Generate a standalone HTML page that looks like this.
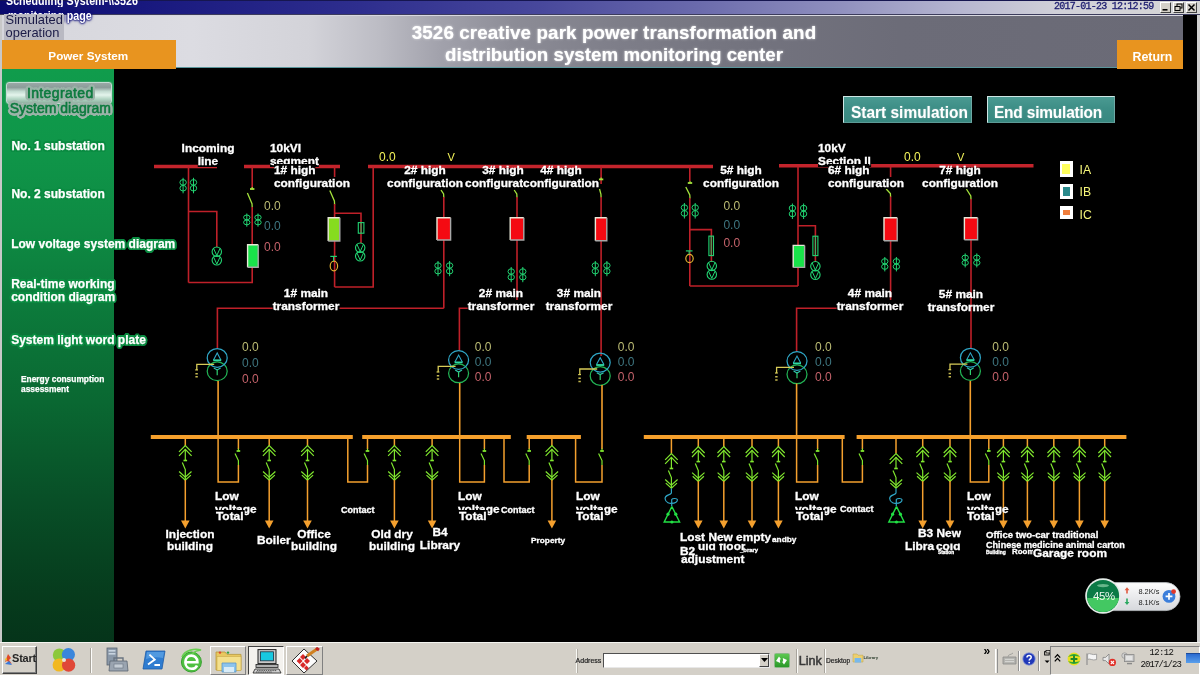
<!DOCTYPE html>
<html><head><meta charset="utf-8"><title>Power monitoring</title>
<style>
*{margin:0;padding:0;box-sizing:border-box}
html,body{width:1200px;height:675px;overflow:hidden;background:#000}
body{font-family:"Liberation Sans",sans-serif}
#root{position:relative;width:1200px;height:675px;overflow:hidden;background:#000;-webkit-font-smoothing:antialiased;filter:opacity(1);will-change:opacity}
#root>div,#root>svg{position:absolute}
#dg{left:0;top:0}
.lb{color:#fff;font-weight:bold;white-space:nowrap;-webkit-text-stroke:.3px #fff}
.v{white-space:nowrap;line-height:14px;font-weight:normal}
/* title bar */
#tb{left:0;top:0;width:1200px;height:15px;background:linear-gradient(90deg,#0a0a6e 0%,#18187e 12%,#2e2e8e 30%,#48489c 45%,#6a6aac 58%,#9090be 70%,#b6b6d0 80%,#d0d0d8 88%,#d6d6d6 100%);border-top:1px solid #161650;border-bottom:1px solid #3c3c5c}
#tb .t1{position:absolute;left:6px;top:-5.6px;transform:scaleY(1.25);transform-origin:0 100%;color:#fff;font-weight:bold;font-size:10.7px;white-space:nowrap;line-height:12px}
#t2{left:8px;top:9px;transform:scaleY(1.2);transform-origin:0 50%;color:#fff;font-weight:bold;font-size:10.7px;white-space:nowrap;line-height:12px;text-shadow:0 0 1.5px #10107a,0 0 2px #10107a,0 0 2px #10107a,0 0 3px #10107a}
#date{left:1054px;top:1px;font-family:"Liberation Mono",monospace;font-size:10px;line-height:12px;color:#1c1c70;white-space:nowrap;letter-spacing:-0.76px;-webkit-text-stroke:.3px #1c1c70}
.wb{top:2px;width:11px;height:11px;background:#d4d0c8;border:1px solid;border-color:#fff #404040 #404040 #fff}
/* header */
#hd{left:2px;top:15px;width:1181.4px;height:53.4px;background:linear-gradient(90deg,#d6d6dc 0%,#dcdce2 16%,#d3d3d9 26%,#bcbcc4 32%,#a2a2ac 37%,#8c8c96 43.5%,#7e7e89 52%,#74747f 62%,#6c6c78 76%,#6a6a76 100%);border-bottom:1.6px solid #5a969c;border-top:1px solid #d8d8e0}
#hdl{left:0;top:15px;width:2px;height:627px;background:#c8c8c8}
#hdr{left:1197px;top:15px;width:3px;height:627px;background:#d0d0d0}
#sim{left:3.6px;top:14.4px;width:60.4px;height:25.6px;background:#b9b9c2;color:#1a1a46;font-size:12.9px;line-height:12.6px;padding:0 0 0 2px;white-space:nowrap}
#ps{left:2px;top:40px;width:174px;height:28.6px;background:#e8941f}
#ps span{position:absolute;left:0;width:172.6px;top:8px;text-align:center;color:#fff;font-weight:bold;font-size:11.7px;line-height:15px}
#ret{left:1116.6px;top:40px;width:66.8px;height:28.6px;background:#e8941f}
#ret span{position:absolute;left:0;width:100%;top:10px;text-align:center;color:#fff;font-weight:bold;font-size:12.4px;line-height:15px;padding-left:5px}
#title{left:300px;width:628px;top:22.2px;text-align:center;color:#fff;font-weight:bold;font-size:18.8px;line-height:21.6px;white-space:nowrap;text-shadow:0 0 3px rgba(255,255,255,.55),0 0 1px rgba(255,255,255,.6)}
/* sidebar */
#sb{left:2px;top:68.6px;width:112px;height:573px;background:linear-gradient(180deg,#109c4c 0%,#0f9649 14%,#0e8a43 28%,#0c7c3c 40%,#0a6832 58%,#084f27 75%,#063a1c 93%,#05341a 100%)}
.sbt{color:#fff;font-weight:bold;font-size:12px;line-height:12.6px;white-space:nowrap;-webkit-text-stroke:.25px #fff;text-shadow:1.30px 0.00px .5px #0b8c42,0.92px 0.92px .5px #0b8c42,0.00px 1.30px .5px #0b8c42,-0.92px 0.92px .5px #0b8c42,-1.30px 0.00px .5px #0b8c42,-0.92px -0.92px .5px #0b8c42,-0.00px -1.30px .5px #0b8c42,0.92px -0.92px .5px #0b8c42,2.10px 0.00px .5px #0b8c42,1.82px 1.05px .5px #0b8c42,1.05px 1.82px .5px #0b8c42,0.00px 2.10px .5px #0b8c42,-1.05px 1.82px .5px #0b8c42,-1.82px 1.05px .5px #0b8c42,-2.10px 0.00px .5px #0b8c42,-1.82px -1.05px .5px #0b8c42,-1.05px -1.82px .5px #0b8c42,-0.00px -2.10px .5px #0b8c42,1.05px -1.82px .5px #0b8c42,1.82px -1.05px .5px #0b8c42}
#ig{left:5.6px;top:82px;width:106.4px;height:21.6px;border-radius:3px;background:linear-gradient(180deg,#9aa8a6 0%,#8c9c9a 22%,#c4dcd2 42%,#e4f4ec 60%,#b8d8c8 78%,#8fb4a2 100%);border:1.6px solid #c4dcd4;box-shadow:0 0 1.5px #a8c4b8}
#igt{left:0px;top:86px;width:120.6px;text-align:center;color:#0c7a3e;font-size:14px;line-height:15px;white-space:nowrap;text-shadow:1.20px 0.00px .4px #9cb4a9,0.85px 0.85px .4px #9cb4a9,0.00px 1.20px .4px #9cb4a9,-0.85px 0.85px .4px #9cb4a9,-1.20px 0.00px .4px #9cb4a9,-0.85px -0.85px .4px #9cb4a9,-0.00px -1.20px .4px #9cb4a9,0.85px -0.85px .4px #9cb4a9,2.00px 0.00px .4px #9cb4a9,1.73px 1.00px .4px #9cb4a9,1.00px 1.73px .4px #9cb4a9,0.00px 2.00px .4px #9cb4a9,-1.00px 1.73px .4px #9cb4a9,-1.73px 1.00px .4px #9cb4a9,-2.00px 0.00px .4px #9cb4a9,-1.73px -1.00px .4px #9cb4a9,-1.00px -1.73px .4px #9cb4a9,-0.00px -2.00px .4px #9cb4a9,1.00px -1.73px .4px #9cb4a9,1.73px -1.00px .4px #9cb4a9,2.60px 0.00px .4px #9cb4a9,2.40px 0.99px .4px #9cb4a9,1.84px 1.84px .4px #9cb4a9,0.99px 2.40px .4px #9cb4a9,0.00px 2.60px .4px #9cb4a9,-0.99px 2.40px .4px #9cb4a9,-1.84px 1.84px .4px #9cb4a9,-2.40px 0.99px .4px #9cb4a9,-2.60px 0.00px .4px #9cb4a9,-2.40px -0.99px .4px #9cb4a9,-1.84px -1.84px .4px #9cb4a9,-0.99px -2.40px .4px #9cb4a9,-0.00px -2.60px .4px #9cb4a9,0.99px -2.40px .4px #9cb4a9,1.84px -1.84px .4px #9cb4a9,2.40px -0.99px .4px #9cb4a9;-webkit-text-stroke:.55px #0c7a3e}
/* sim buttons */
.sbtn{top:95.5px;height:27.5px;background:linear-gradient(180deg,#4a9a92 0%,#3d8e86 45%,#388880 100%);border:1.5px solid;border-color:#cfe6e4 #6ea8a4 #5c9a96 #cfe6e4;color:#fff;font-weight:bold;font-size:16.2px;line-height:18px;white-space:nowrap;text-shadow:0 0 2px rgba(255,255,255,.35)}
.sbtn span{position:absolute;top:6.1px;transform:scaleX(.955);transform-origin:0 50%}
/* legend */
.lgb{left:1059.6px;width:13.8px;background:#fff}
.lgb i{position:absolute;display:block}
.lgt{left:1079.6px;color:#f6f67a;font-size:12.2px;line-height:14px;white-space:nowrap}
/* taskbar */
#tk{left:0;top:641.6px;width:1200px;height:34px;background:#d4d0c8;border-top:1px solid #f4f4f0}
#tk *{position:absolute}

</style></head>
<body>
<div id="root">
<div id="tb"><div class="t1">Scheduling System-\\3526</div></div>
<div id="date">2017-01-23 12:12:59</div>
<div class="wb" style="left:1160px"><svg width="9" height="9" style="position:absolute;left:0;top:0"><rect x="1.5" y="6" width="5" height="1.6" fill="#000"/></svg></div>
<div class="wb" style="left:1173px"><svg width="9" height="9" style="position:absolute;left:0;top:0"><rect x="3" y="1" width="5" height="4" fill="none" stroke="#000" stroke-width="1"/><rect x="1" y="3.5" width="5" height="4" fill="#d4d0c8" stroke="#000" stroke-width="1"/></svg></div>
<div class="wb" style="left:1186px"><svg width="9" height="9" style="position:absolute;left:0;top:0"><path d="M1.5 1.5 L7.5 7.5 M7.5 1.5 L1.5 7.5" stroke="#000" stroke-width="1.5"/></svg></div>
<div id="hdl"></div><div id="hdr"></div>
<div id="hd"></div>
<div id="t2">monitoring page</div>
<div id="sim">Simulated<br>operation</div>
<div id="ps"><span>Power System</span></div>
<div id="ret"><span>Return</span></div>
<div id="title"><span style="letter-spacing:.11px">3526 creative park power transformation and</span><br>distribution system monitoring center</div>
<div id="sb"></div>
<div id="ig"></div>
<div id="igt"><span style="letter-spacing:.36px">Integrated</span><br>System diagram</div>
<div class="sbt" style="left:11.4px;top:140.4px">No. 1 substation</div>
<div class="sbt" style="left:11.4px;top:188.4px">No. 2 substation</div>
<div class="sbt" style="left:11.2px;top:237.6px">Low voltage system diagram</div>
<div class="sbt" style="left:11.2px;top:278px">Real-time working<br>condition diagram</div>
<div class="sbt" style="left:11.2px;top:333.6px">System light word plate</div>
<div class="sbt" style="left:21px;top:373.8px;font-size:8.4px;line-height:10.2px;text-shadow:none">Energy consumption<br>assessment</div>
<div class="sbtn" style="left:843px;width:129px"><span style="left:6.6px">Start simulation</span></div>
<div class="sbtn" style="left:987px;width:128.4px"><span style="left:5.6px;letter-spacing:-.2px">End simulation</span></div>
<div class="lgb" style="top:161px;height:16px"><i style="left:2.6px;top:2.8px;width:7.6px;height:10px;background:#ffff5e"></i></div>
<div class="lgb" style="top:183.8px;height:14.8px"><i style="left:3.4px;top:3.6px;width:6.6px;height:8.2px;background:#2a8a8c"></i></div>
<div class="lgb" style="top:206px;height:12.8px"><i style="left:3px;top:3.8px;width:7px;height:5.4px;background:#f07e3c"></i></div>
<div class="lgt" style="top:162.6px">IA</div>
<div class="lgt" style="top:185px">IB</div>
<div class="lgt" style="top:207.6px">IC</div>
<!--TB-BEGIN-->
<div id="wg" style="left:1086.4px;top:582.4px;width:95px;height:29px">
<svg width="95" height="29" viewBox="0 0 95 29" style="position:absolute;left:0;top:0;overflow:visible">
<defs><clipPath id="cc"><circle cx="17" cy="14" r="16"/></clipPath>
<linearGradient id="pg" x1="0" y1="0" x2="0" y2="1"><stop offset="0" stop-color="#fdfdfd"/><stop offset="1" stop-color="#d6d8dc"/></linearGradient></defs>
<rect x="8" y="0.6" width="86" height="28" rx="14" fill="url(#pg)" stroke="#b8bcc0" stroke-width=".8"/>
<circle cx="17" cy="14" r="17.8" fill="#e4ece8"/>
<circle cx="17" cy="14" r="16.1" fill="#0b7a46"/>
<rect x="0" y="16" width="34" height="16" fill="#43c862" clip-path="url(#cc)"/>
<ellipse cx="17" cy="3.6" rx="6" ry="1.6" fill="#8fd0a8" opacity=".7"/>
<path d="M41 5.2 L38.6 8.2 H40.2 V11.6 H41.8 V8.2 H43.4 Z" fill="#e05a40"/>
<path d="M41 23 L38.6 20 H40.2 V16.6 H41.8 V20 H43.4 Z" fill="#2aa860"/>
<circle cx="83" cy="14.4" r="6.4" fill="#3b7edb"/>
<path d="M83 11 V17.8 M79.6 14.4 H86.4" stroke="#fff" stroke-width="1.7"/>
<circle cx="87.6" cy="9.6" r="2.4" fill="#e0382c"/>
</svg>
<div style="position:absolute;left:5.5px;top:6.6px;width:24px;text-align:center;color:#eef8f0;font-size:11.4px;line-height:14px;letter-spacing:-.3px">45%</div>
<div style="position:absolute;left:52px;top:3.8px;color:#222;font-size:7.4px;line-height:11px;white-space:nowrap">8.2K/s<br>8.1K/s</div>
</div>
<div id="tk">
<!-- start -->
<div style="left:2px;top:3px;width:35px;height:28px;border:1px solid;border-color:#fff #404040 #404040 #fff;box-shadow:inset -1px -1px 0 #808080"></div>
<svg style="left:4px;top:10px" width="9" height="13" viewBox="0 0 9 13"><path d="M1 9 L4 1 L7 5 L5 7 L8 11 L3 8 Z" fill="#e04a28"/><path d="M1 11 L5 8 L8 12 Z" fill="#3a78d8"/><path d="M0.5 6 L3 5 L3 8 Z" fill="#f0c020"/></svg>
<div style="left:12.2px;top:8.4px;font-size:11.8px;font-weight:bold;line-height:14px;color:#262626;letter-spacing:-.2px;transform:scaleX(.93);transform-origin:0 0">Start</div>
<!-- 4 colour -->
<svg style="left:51px;top:3px" width="26" height="28" viewBox="0 0 26 28"><circle cx="8.4" cy="9" r="6.6" fill="#8cc83c"/><circle cx="17.4" cy="8.6" r="6.6" fill="#3a86dc"/><circle cx="8.2" cy="19" r="6.6" fill="#f2b820"/><circle cx="17.6" cy="19.2" r="6.6" fill="#e04838"/><circle cx="13" cy="14" r="2" fill="#e8e4dc"/></svg>
<div style="left:90.4px;top:5px;width:2px;height:25px;border-left:1px solid #a8a49c;border-right:1px solid #fdfdfb"></div>
<!-- server icon -->
<svg style="left:104px;top:3px" width="26" height="28" viewBox="0 0 26 28"><rect x="3" y="2" width="10" height="17" fill="#8a98a8" stroke="#5a6470" stroke-width=".8"/><rect x="4.6" y="4" width="6.8" height="1.6" fill="#c8d4e0"/><rect x="4.6" y="7" width="6.8" height="1.6" fill="#c8d4e0"/><path d="M6 15 H23 L24 25 H5 Z" fill="#9aa4b0" stroke="#5c6672" stroke-width=".8"/><rect x="10" y="18" width="9" height="4" fill="#c4ccd4" stroke="#6a7480" stroke-width=".6"/><path d="M10 15 V12 H19 V15" fill="none" stroke="#6a7480" stroke-width="1.4"/></svg>
<!-- powershell -->
<svg style="left:142px;top:7px" width="24" height="20" viewBox="0 0 24 20"><path d="M4 1 H23 L20 19 H1 Z" fill="#2f7cd0" stroke="#1c5ca8" stroke-width=".8"/><path d="M5 2 H22 L21 8 Q12 6 4 9 Z" fill="#5aa0e4" opacity=".8"/><path d="M7.4 4.6 L12.8 9.6 L6 14.6 M12.4 15 H18" fill="none" stroke="#fff" stroke-width="1.8"/></svg>
<!-- IE green -->
<svg style="left:179px;top:4px" width="26" height="27" viewBox="0 0 26 27"><circle cx="12.4" cy="15" r="10" fill="#4ec040"/><circle cx="12.4" cy="15" r="10" fill="none" stroke="#38a030" stroke-width="1"/><path d="M6.6 15.2 H18.4 C18.4 10 14.8 8.6 12.4 8.6 C9 8.6 6.4 11.4 6.4 15.2 C6.4 19.4 9.2 21.8 12.6 21.8 C15.2 21.8 17.2 20.4 18 18.4" fill="none" stroke="#fff" stroke-width="2.6"/><path d="M3 10 C6 3 16 1 22 3 C18 3.4 15 5 13 6.6" fill="none" stroke="#68d050" stroke-width="1.6"/></svg>
<!-- folder button -->
<div style="left:210px;top:3px;width:36px;height:29px;border:1px solid;border-color:#fff #808080 #808080 #fff"></div>
<svg style="left:214px;top:5px" width="30" height="26" viewBox="0 0 30 26"><path d="M2 4 H11 L13 6.4 H27 V22 H2 Z" fill="#e8c860" stroke="#b89838" stroke-width=".8"/><circle cx="6" cy="4.6" r="1.2" fill="#e04030"/><circle cx="14" cy="4.6" r="1.2" fill="#30a040"/><rect x="3" y="8.4" width="24" height="14" fill="#f4e08c" stroke="#c8a848" stroke-width=".6"/><path d="M8 24 V15 H22 V24 Z" fill="#8cc4ec" stroke="#5a98c8" stroke-width=".8"/><rect x="10" y="19" width="10" height="5" fill="#d8ecf8"/></svg>
<!-- computer (pressed) -->
<div style="left:248px;top:3px;width:36px;height:29px;background:#f4f2ee;border:1px solid;border-color:#404040 #fff #fff #404040"></div>
<svg style="left:252px;top:5px" width="30" height="26" viewBox="0 0 30 26"><rect x="6" y="1.6" width="18" height="14" fill="#c8c8c8" stroke="#202020" stroke-width="1"/><rect x="8.4" y="3.8" width="13.2" height="9" fill="#18c8e0" stroke="#203040" stroke-width=".8"/><rect x="4" y="16.4" width="22" height="3" fill="#b0b0b0" stroke="#202020" stroke-width=".8"/><path d="M3 21 H27 L29 25 H1 Z" fill="#d0d0d0" stroke="#202020" stroke-width=".8"/><path d="M5 22.6 H25 M4 24 H20" stroke="#303030" stroke-width=".8" stroke-dasharray="1.4 .8"/></svg>
<!-- paint -->
<div style="left:286px;top:3px;width:37px;height:29px;border:1px solid;border-color:#fff #808080 #808080 #fff"></div>
<svg style="left:290px;top:4px" width="30" height="28" viewBox="0 0 30 28"><path d="M14 2 L27 14 L14 26 L2 14 Z" fill="#fcfcfc" stroke="#303030" stroke-width="1"/><path d="M10 10 l3 -3 l3 3 l-3 3 z M14 14 l3 -3 l3 3 l-3 3 z M10 18 l3 -3 l3 3 l-3 3 z M6.6 14 l3 -3 l3 3 l-3 3 z M14 21 l2.4 -2.4 l2.4 2.4 l-2.4 2.4 z" fill="#d82828"/><path d="M17 9 L27 2" stroke="#d08020" stroke-width="3"/><path d="M26 1 L29 3" stroke="#c02020" stroke-width="3"/><path d="M17 9 l-2 2.6" stroke="#202020" stroke-width="1.6"/></svg>
<!-- address -->
<div style="left:576px;top:6px;width:2px;height:24px;border-left:1px solid #f8f8f4;border-right:1px solid #b4b0a8"></div>
<div style="left:575.6px;top:14.4px;font-size:7px;line-height:8px;color:#222;-webkit-text-stroke:.2px #222">Address</div>
<div style="left:602.6px;top:10px;width:167px;height:15.4px;background:#fff;border:1.6px solid;border-color:#505050 #e8e8e8 #e8e8e8 #505050"></div>
<div style="left:758.6px;top:11.6px;width:10px;height:12.4px;background:#d4d0c8;border:1px solid;border-color:#fff #404040 #404040 #fff"></div>
<svg style="left:760.6px;top:15.6px" width="7" height="5"><path d="M0 0 H7 L3.5 4 Z" fill="#000"/></svg>
<div style="left:773.8px;top:10px;width:16px;height:15px;background:linear-gradient(180deg,#5cc850,#2a9828);border:1px solid #8cb888;border-radius:1.5px"></div>
<svg style="left:775.4px;top:12px" width="13" height="11" viewBox="0 0 13 11"><path d="M1 6 L4 1.6 L6 4.2 L4.8 4.6 L5.2 8 Z" fill="#fff"/><path d="M12 5 L9 9.4 L7 6.8 L8.2 6.4 L7.8 3 Z" fill="#fff"/></svg>
<div style="left:795.6px;top:6px;width:2px;height:24px;border-left:1px solid #a8a49c;border-right:1px solid #fbfbf8"></div>
<div style="left:798.8px;top:11.2px;font-size:12.6px;line-height:14px;color:#383838;-webkit-text-stroke:.5px #383838">Link</div>
<div style="left:823.6px;top:6px;width:2px;height:24px;border-left:1px solid #a8a49c;border-right:1px solid #fbfbf8"></div>
<div style="left:826px;top:14.8px;font-size:6.6px;line-height:8px;color:#222;-webkit-text-stroke:.2px #222">Desktop</div>
<svg style="left:851.6px;top:9.6px" width="12" height="12" viewBox="0 0 12 12"><path d="M1 2 H5 L6 3.2 H11 V10 H1 Z" fill="#ecd070" stroke="#c0a040" stroke-width=".5"/><rect x="2.6" y="6" width="6.6" height="4.6" fill="#78b8ec"/></svg>
<div style="left:863.4px;top:12.6px;font-size:4.4px;line-height:5px;color:#304030;font-weight:bold">Library</div>
<!-- right toolbars -->
<div style="left:983.4px;top:2.6px;font-size:12px;line-height:12px;font-weight:bold;color:#000;letter-spacing:-1.2px">&raquo;</div>
<div style="left:995px;top:6px;width:3px;height:24px;border-left:1px solid #fff;border-right:1px solid #909090;background:#e8e6e0"></div>
<svg style="left:1001.6px;top:9px" width="15" height="13" viewBox="0 0 15 13"><path d="M1 5 H14 V12 H1 Z" fill="#b4b4b0" stroke="#8c8c88" stroke-width=".8"/><path d="M6 5 C6 2 9 3 11 1" fill="none" stroke="#a0a09c" stroke-width="1"/><path d="M3 7.4 H12 M3 9.6 H12" stroke="#d8d8d4" stroke-width="1"/></svg>
<div style="left:1018px;top:8px;width:2px;height:20px;border-left:1px solid #909090;border-right:1px solid #fff"></div>
<svg style="left:1022.4px;top:9.4px" width="14" height="14" viewBox="0 0 14 14"><circle cx="7" cy="7" r="6.2" fill="#2038b8" stroke="#8898d8" stroke-width=".8"/><path d="M5 5.4 C5 2.8 9.2 2.8 9.2 5.2 C9.2 6.8 7.2 6.8 7.2 8.4" fill="none" stroke="#fff" stroke-width="1.5"/><circle cx="7.2" cy="10.6" r=".95" fill="#fff"/></svg>
<div style="left:1038px;top:8px;width:2px;height:20px;border-left:1px solid #909090;border-right:1px solid #fff"></div>
<svg style="left:1042.6px;top:6px" width="8" height="16" viewBox="0 0 8 16"><rect x="1.6" y="2.6" width="4.6" height="3.4" fill="none" stroke="#000" stroke-width=".9"/><rect x="3" y="1.4" width="4" height="2.6" fill="#d4d0c8" stroke="#000" stroke-width=".7"/><path d="M1.6 11.4 H6.6 L4.1 14 Z" fill="#000"/></svg>
<!-- tray -->
<div style="left:1050.4px;top:3px;width:150px;height:29px;border:1px solid;border-color:#808080 #fff #fff #808080"></div>
<svg style="left:1054px;top:10.6px" width="7" height="10" viewBox="0 0 7 10"><path d="M.8 4.6 L3.5 1.6 L6.2 4.6 M.8 8.4 L3.5 5.4 L6.2 8.4" fill="none" stroke="#000" stroke-width="1.3"/></svg>
<svg style="left:1066.6px;top:9.4px" width="14" height="14" viewBox="0 0 14 14"><circle cx="7" cy="7" r="6.4" fill="#e8e020"/><path d="M1 5 C4 1 10 1 13 5 C10 3.6 4 3.6 1 5 Z M1 9 C4 13 10 13 13 9 C10 10.4 4 10.4 1 9 Z" fill="#30a838"/><path d="M7 3.6 V10.4 M3.6 7 H10.4" stroke="#208828" stroke-width="1.9"/></svg>
<svg style="left:1084.6px;top:9.4px" width="14" height="14" viewBox="0 0 14 14"><path d="M2 1.4 V13" stroke="#909090" stroke-width="1.2"/><path d="M2.6 2 C5 .6 7 3.6 11.6 2.2 V7.6 C7 9 5 6 2.6 7.4 Z" fill="#f4f4f4" stroke="#909090" stroke-width=".8"/></svg>
<svg style="left:1102px;top:9px" width="15" height="15" viewBox="0 0 15 15"><path d="M1 5.4 H3.6 L7 2 V12 L3.6 8.6 H1 Z" fill="#e8e8e8" stroke="#808080" stroke-width=".8"/><circle cx="10.4" cy="10.4" r="3.6" fill="#e03028"/><path d="M8.8 8.8 L12 12 M12 8.8 L8.8 12" stroke="#fff" stroke-width="1.1"/></svg>
<svg style="left:1120.6px;top:8.4px" width="15" height="15" viewBox="0 0 15 15"><circle cx="3.6" cy="4.6" r="2.8" fill="#d0d0d0" stroke="#909090" stroke-width=".7"/><rect x="3.4" y="3.6" width="9.6" height="7" fill="#c8c8c8" stroke="#888" stroke-width=".8"/><rect x="5" y="5" width="6.4" height="4" fill="#e4e4e4"/><path d="M6 12.6 H11" stroke="#888" stroke-width="1.4"/></svg>
<div style="left:1149.6px;top:5.6px;font-family:'Liberation Mono',monospace;font-size:9px;line-height:10px;color:#101010;letter-spacing:-.7px">12:12</div>
<div style="left:1140.6px;top:17.6px;font-family:'Liberation Mono',monospace;font-size:9px;line-height:10px;color:#101010;letter-spacing:-.9px">2017/1/23</div>
<div style="left:1186px;top:10px;width:14px;height:10px;background:linear-gradient(180deg,#2a6ad0,#5aa0ec);border-top:1px solid #1c4a98"></div>
</div>
<!--TB-END-->

<svg id="dg" width="1200" height="675" viewBox="0 0 1200 675" shape-rendering="geometricPrecision">
<line x1="154.0" y1="166.5" x2="217.0" y2="166.5" stroke="#c4242c" stroke-width="3.6" />
<line x1="244.0" y1="166.5" x2="340.0" y2="166.5" stroke="#c4242c" stroke-width="3.6" />
<line x1="368.0" y1="166.5" x2="713.0" y2="166.5" stroke="#c4242c" stroke-width="3.6" />
<line x1="779.0" y1="165.8" x2="1033.5" y2="165.8" stroke="#c4242c" stroke-width="3.6" />
<line x1="188.5" y1="166.5" x2="188.5" y2="282.5" stroke="#bf2029" stroke-width="1.6" />
<line x1="183.1" y1="177.8" x2="183.1" y2="193.3" stroke="#22d472" stroke-width="1.0" />
<ellipse cx="183.1" cy="182.4" rx="3.2" ry="2.8" stroke="#22d472" stroke-width="1.0" fill="none"/>
<ellipse cx="183.1" cy="188.2" rx="3.2" ry="2.8" stroke="#22d472" stroke-width="1.0" fill="none"/>
<line x1="193.5" y1="177.8" x2="193.5" y2="193.3" stroke="#22d472" stroke-width="1.0" />
<ellipse cx="193.5" cy="182.4" rx="3.2" ry="2.8" stroke="#22d472" stroke-width="1.0" fill="none"/>
<ellipse cx="193.5" cy="188.2" rx="3.2" ry="2.8" stroke="#22d472" stroke-width="1.0" fill="none"/>
<polyline points="188.5,211.5 216.8,211.5 216.8,247.0" stroke="#bf2029" stroke-width="1.6" fill="none" />
<ellipse cx="216.8" cy="251.7" rx="4.7" ry="4.7" stroke="#22d472" stroke-width="1.1" fill="none"/>
<polyline points="213.6,248.5 216.8,255.5 220.0,248.5" stroke="#22d472" stroke-width="1.0" fill="none" />
<ellipse cx="216.8" cy="260.3" rx="4.7" ry="4.7" stroke="#22d472" stroke-width="1.1" fill="none"/>
<polyline points="213.6,257.1 216.8,264.1 220.0,257.1" stroke="#22d472" stroke-width="1.0" fill="none" />
<polyline points="188.5,282.5 252.2,282.5 252.2,267.0" stroke="#bf2029" stroke-width="1.6" fill="none" />
<line x1="252.2" y1="166.5" x2="252.2" y2="188.0" stroke="#bf2029" stroke-width="1.6" />
<line x1="250.0" y1="189.0" x2="254.4" y2="189.0" stroke="#a4e23c" stroke-width="1.8" />
<line x1="252.2" y1="187.0" x2="252.2" y2="189.0" stroke="#a4e23c" stroke-width="1.2" />
<polyline points="247.4,193.0 252.0,203.7 252.2,207.2" stroke="#a4e23c" stroke-width="1.3" fill="none" />
<line x1="252.2" y1="207.0" x2="252.2" y2="245.0" stroke="#bf2029" stroke-width="1.6" />
<line x1="246.8" y1="213.5" x2="246.8" y2="226.7" stroke="#22d472" stroke-width="1.0" />
<ellipse cx="246.8" cy="217.4" rx="3.2" ry="2.4" stroke="#22d472" stroke-width="1.0" fill="none"/>
<ellipse cx="246.8" cy="222.4" rx="3.2" ry="2.4" stroke="#22d472" stroke-width="1.0" fill="none"/>
<line x1="258.0" y1="213.5" x2="258.0" y2="226.7" stroke="#22d472" stroke-width="1.0" />
<ellipse cx="258.0" cy="217.4" rx="3.2" ry="2.4" stroke="#22d472" stroke-width="1.0" fill="none"/>
<ellipse cx="258.0" cy="222.4" rx="3.2" ry="2.4" stroke="#22d472" stroke-width="1.0" fill="none"/>
<rect x="247.6" y="244.8" width="10.6" height="22.4" fill="#19e34a" stroke="none" stroke-width="1" />
<path d="M247.6 267.2 V244.8 H258.2" stroke="#e8e8d8" stroke-width="1.4" fill="none"/>
<path d="M258.2 244.8 V267.2 H247.6" stroke="#a8a8a8" stroke-width="1.4" fill="none"/>
<line x1="334.6" y1="166.5" x2="334.6" y2="186.0" stroke="#bf2029" stroke-width="1.6" />
<polyline points="329.8,190.6 334.4,201.0 334.6,204.5" stroke="#a4e23c" stroke-width="1.3" fill="none" />
<line x1="334.6" y1="204.0" x2="334.6" y2="287.0" stroke="#bf2029" stroke-width="1.6" />
<polyline points="334.6,213.2 361.0,213.2 361.0,243.0" stroke="#bf2029" stroke-width="1.6" fill="none" />
<rect x="358.3" y="222.6" width="5.6" height="10.6" fill="none" stroke="#22d472" stroke-width="1.1" />
<line x1="361.1" y1="222.6" x2="361.1" y2="233.2" stroke="#22d472" stroke-width="0.9" />
<ellipse cx="360.2" cy="247.7" rx="4.7" ry="4.7" stroke="#22d472" stroke-width="1.1" fill="none"/>
<polyline points="357.0,244.5 360.2,251.5 363.4,244.5" stroke="#22d472" stroke-width="1.0" fill="none" />
<ellipse cx="360.2" cy="256.3" rx="4.7" ry="4.7" stroke="#22d472" stroke-width="1.1" fill="none"/>
<polyline points="357.0,253.1 360.2,260.1 363.4,253.1" stroke="#22d472" stroke-width="1.0" fill="none" />
<rect x="328.2" y="217.8" width="11.6" height="23.2" fill="#86dc1e" stroke="none" stroke-width="1" />
<path d="M328.2 241.0 V217.8 H339.8" stroke="#e8e8d8" stroke-width="1.4" fill="none"/>
<path d="M339.8 217.8 V241.0 H328.2" stroke="#a8a8a8" stroke-width="1.4" fill="none"/>
<ellipse cx="333.9" cy="266.0" rx="3.7" ry="4.9" stroke="#e0b030" stroke-width="1.2" fill="none"/>
<line x1="330.3" y1="256.4" x2="336.9" y2="256.4" stroke="#22d472" stroke-width="1.2" />
<line x1="333.5" y1="256.4" x2="333.5" y2="261.1" stroke="#22d472" stroke-width="1.0" />
<polyline points="334.6,287.0 373.2,287.0 373.2,166.5" stroke="#bf2029" stroke-width="1.6" fill="none" />
<polyline points="441.0,190.0 443.6,194.0 443.8,197.5" stroke="#a4e23c" stroke-width="1.3" fill="none" />
<line x1="443.8" y1="197.0" x2="443.8" y2="308.2" stroke="#bf2029" stroke-width="1.6" />
<rect x="437.0" y="217.8" width="13.6" height="22.2" fill="#f40a12" stroke="none" stroke-width="1" />
<path d="M437.0 240.0 V217.8 H450.6" stroke="#e8e8d8" stroke-width="1.4" fill="none"/>
<path d="M450.6 217.8 V240.0 H437.0" stroke="#a8a8a8" stroke-width="1.4" fill="none"/>
<line x1="438.0" y1="261.0" x2="438.0" y2="276.2" stroke="#22d472" stroke-width="1.0" />
<ellipse cx="438.0" cy="265.5" rx="3.2" ry="2.7" stroke="#22d472" stroke-width="1.0" fill="none"/>
<ellipse cx="438.0" cy="271.2" rx="3.2" ry="2.7" stroke="#22d472" stroke-width="1.0" fill="none"/>
<line x1="449.6" y1="261.0" x2="449.6" y2="276.2" stroke="#22d472" stroke-width="1.0" />
<ellipse cx="449.6" cy="265.5" rx="3.2" ry="2.7" stroke="#22d472" stroke-width="1.0" fill="none"/>
<ellipse cx="449.6" cy="271.2" rx="3.2" ry="2.7" stroke="#22d472" stroke-width="1.0" fill="none"/>
<polyline points="514.2,190.0 516.8,194.0 517.0,197.5" stroke="#a4e23c" stroke-width="1.3" fill="none" />
<line x1="517.0" y1="197.0" x2="517.0" y2="303.0" stroke="#bf2029" stroke-width="1.6" />
<rect x="510.2" y="217.8" width="13.6" height="22.2" fill="#f40a12" stroke="none" stroke-width="1" />
<path d="M510.2 240.0 V217.8 H523.8" stroke="#e8e8d8" stroke-width="1.4" fill="none"/>
<path d="M523.8 217.8 V240.0 H510.2" stroke="#a8a8a8" stroke-width="1.4" fill="none"/>
<line x1="511.2" y1="267.0" x2="511.2" y2="282.2" stroke="#22d472" stroke-width="1.0" />
<ellipse cx="511.2" cy="271.5" rx="3.2" ry="2.7" stroke="#22d472" stroke-width="1.0" fill="none"/>
<ellipse cx="511.2" cy="277.2" rx="3.2" ry="2.7" stroke="#22d472" stroke-width="1.0" fill="none"/>
<line x1="522.8" y1="267.0" x2="522.8" y2="282.2" stroke="#22d472" stroke-width="1.0" />
<ellipse cx="522.8" cy="271.5" rx="3.2" ry="2.7" stroke="#22d472" stroke-width="1.0" fill="none"/>
<ellipse cx="522.8" cy="277.2" rx="3.2" ry="2.7" stroke="#22d472" stroke-width="1.0" fill="none"/>
<line x1="601.1" y1="166.5" x2="601.1" y2="184.0" stroke="#bf2029" stroke-width="1.6" />
<line x1="598.9" y1="179.4" x2="603.3" y2="179.4" stroke="#a4e23c" stroke-width="1.8" />
<line x1="601.1" y1="177.4" x2="601.1" y2="179.4" stroke="#a4e23c" stroke-width="1.2" />
<polyline points="599.5,189.0 600.9,194.0 601.1,197.5" stroke="#a4e23c" stroke-width="1.3" fill="none" />
<line x1="601.1" y1="197.0" x2="601.1" y2="356.0" stroke="#bf2029" stroke-width="1.6" />
<rect x="595.4" y="217.8" width="11.4" height="23.0" fill="#f40a12" stroke="none" stroke-width="1" />
<path d="M595.4 240.8 V217.8 H606.8" stroke="#e8e8d8" stroke-width="1.4" fill="none"/>
<path d="M606.8 217.8 V240.8 H595.4" stroke="#a8a8a8" stroke-width="1.4" fill="none"/>
<line x1="595.3" y1="261.0" x2="595.3" y2="276.2" stroke="#22d472" stroke-width="1.0" />
<ellipse cx="595.3" cy="265.5" rx="3.2" ry="2.7" stroke="#22d472" stroke-width="1.0" fill="none"/>
<ellipse cx="595.3" cy="271.2" rx="3.2" ry="2.7" stroke="#22d472" stroke-width="1.0" fill="none"/>
<line x1="606.9" y1="261.0" x2="606.9" y2="276.2" stroke="#22d472" stroke-width="1.0" />
<ellipse cx="606.9" cy="265.5" rx="3.2" ry="2.7" stroke="#22d472" stroke-width="1.0" fill="none"/>
<ellipse cx="606.9" cy="271.2" rx="3.2" ry="2.7" stroke="#22d472" stroke-width="1.0" fill="none"/>
<polyline points="443.8,308.2 217.4,308.2 217.4,348.0" stroke="#bf2029" stroke-width="1.6" fill="none" />
<polyline points="517.0,303.0 517.0,308.2 459.4,308.2 459.4,351.0" stroke="#bf2029" stroke-width="1.6" fill="none" />
<line x1="689.8" y1="166.5" x2="689.8" y2="181.0" stroke="#bf2029" stroke-width="1.6" />
<line x1="687.8" y1="183.0" x2="692.2" y2="183.0" stroke="#a4e23c" stroke-width="1.8" />
<line x1="690.0" y1="181.0" x2="690.0" y2="183.0" stroke="#a4e23c" stroke-width="1.2" />
<polyline points="685.8,187.0 689.8,195.0 690.0,198.5" stroke="#a4e23c" stroke-width="1.3" fill="none" />
<line x1="689.8" y1="198.0" x2="689.8" y2="286.0" stroke="#bf2029" stroke-width="1.6" />
<line x1="684.4" y1="203.0" x2="684.4" y2="218.5" stroke="#22d472" stroke-width="1.0" />
<ellipse cx="684.4" cy="207.6" rx="3.2" ry="2.8" stroke="#22d472" stroke-width="1.0" fill="none"/>
<ellipse cx="684.4" cy="213.4" rx="3.2" ry="2.8" stroke="#22d472" stroke-width="1.0" fill="none"/>
<line x1="695.2" y1="203.0" x2="695.2" y2="218.5" stroke="#22d472" stroke-width="1.0" />
<ellipse cx="695.2" cy="207.6" rx="3.2" ry="2.8" stroke="#22d472" stroke-width="1.0" fill="none"/>
<ellipse cx="695.2" cy="213.4" rx="3.2" ry="2.8" stroke="#22d472" stroke-width="1.0" fill="none"/>
<polyline points="689.8,229.6 711.4,229.6 711.4,262.0" stroke="#bf2029" stroke-width="1.6" fill="none" />
<rect x="708.9" y="236.1" width="4.6" height="19.5" fill="none" stroke="#22d472" stroke-width="1.1" />
<line x1="711.2" y1="236.1" x2="711.2" y2="255.6" stroke="#22d472" stroke-width="0.9" />
<ellipse cx="711.8" cy="265.9" rx="4.7" ry="4.7" stroke="#22d472" stroke-width="1.1" fill="none"/>
<polyline points="708.6,262.7 711.8,269.7 715.0,262.7" stroke="#22d472" stroke-width="1.0" fill="none" />
<ellipse cx="711.8" cy="274.5" rx="4.7" ry="4.7" stroke="#22d472" stroke-width="1.1" fill="none"/>
<polyline points="708.6,271.3 711.8,278.3 715.0,271.3" stroke="#22d472" stroke-width="1.0" fill="none" />
<ellipse cx="689.5" cy="258.5" rx="3.7" ry="4.1" stroke="#e0b030" stroke-width="1.2" fill="none"/>
<line x1="685.9" y1="250.9" x2="692.5" y2="250.9" stroke="#22d472" stroke-width="1.2" />
<line x1="689.1" y1="250.9" x2="689.1" y2="254.4" stroke="#22d472" stroke-width="1.0" />
<polyline points="689.8,286.0 798.0,286.0" stroke="#bf2029" stroke-width="1.6" fill="none" />
<line x1="798.0" y1="166.5" x2="798.0" y2="286.0" stroke="#bf2029" stroke-width="1.6" />
<line x1="792.4" y1="203.5" x2="792.4" y2="219.0" stroke="#22d472" stroke-width="1.0" />
<ellipse cx="792.4" cy="208.1" rx="3.2" ry="2.8" stroke="#22d472" stroke-width="1.0" fill="none"/>
<ellipse cx="792.4" cy="213.9" rx="3.2" ry="2.8" stroke="#22d472" stroke-width="1.0" fill="none"/>
<line x1="803.6" y1="203.5" x2="803.6" y2="219.0" stroke="#22d472" stroke-width="1.0" />
<ellipse cx="803.6" cy="208.1" rx="3.2" ry="2.8" stroke="#22d472" stroke-width="1.0" fill="none"/>
<ellipse cx="803.6" cy="213.9" rx="3.2" ry="2.8" stroke="#22d472" stroke-width="1.0" fill="none"/>
<polyline points="798.0,225.8 815.4,225.8 815.4,262.0" stroke="#bf2029" stroke-width="1.6" fill="none" />
<rect x="812.9" y="236.2" width="5.0" height="19.4" fill="none" stroke="#22d472" stroke-width="1.1" />
<line x1="815.4" y1="236.2" x2="815.4" y2="255.6" stroke="#22d472" stroke-width="0.9" />
<ellipse cx="815.4" cy="266.2" rx="4.7" ry="4.7" stroke="#22d472" stroke-width="1.1" fill="none"/>
<polyline points="812.2,263.0 815.4,270.0 818.6,263.0" stroke="#22d472" stroke-width="1.0" fill="none" />
<ellipse cx="815.4" cy="274.8" rx="4.7" ry="4.7" stroke="#22d472" stroke-width="1.1" fill="none"/>
<polyline points="812.2,271.6 815.4,278.6 818.6,271.6" stroke="#22d472" stroke-width="1.0" fill="none" />
<rect x="793.2" y="245.4" width="11.4" height="22.0" fill="#19e34a" stroke="none" stroke-width="1" />
<path d="M793.2 267.4 V245.4 H804.6" stroke="#e8e8d8" stroke-width="1.4" fill="none"/>
<path d="M804.6 245.4 V267.4 H793.2" stroke="#a8a8a8" stroke-width="1.4" fill="none"/>
<line x1="890.6" y1="166.5" x2="890.6" y2="184.0" stroke="#bf2029" stroke-width="1.6" />
<polyline points="886.2,189.0 890.4,193.5 890.6,197.0" stroke="#a4e23c" stroke-width="1.3" fill="none" />
<line x1="890.6" y1="196.5" x2="890.6" y2="303.0" stroke="#bf2029" stroke-width="1.6" />
<rect x="884.0" y="217.8" width="13.2" height="23.0" fill="#f40a12" stroke="none" stroke-width="1" />
<path d="M884.0 240.8 V217.8 H897.2" stroke="#e8e8d8" stroke-width="1.4" fill="none"/>
<path d="M897.2 217.8 V240.8 H884.0" stroke="#a8a8a8" stroke-width="1.4" fill="none"/>
<line x1="884.8" y1="257.0" x2="884.8" y2="271.4" stroke="#22d472" stroke-width="1.0" />
<ellipse cx="884.8" cy="261.3" rx="3.2" ry="2.6" stroke="#22d472" stroke-width="1.0" fill="none"/>
<ellipse cx="884.8" cy="266.7" rx="3.2" ry="2.6" stroke="#22d472" stroke-width="1.0" fill="none"/>
<line x1="896.4" y1="257.0" x2="896.4" y2="271.4" stroke="#22d472" stroke-width="1.0" />
<ellipse cx="896.4" cy="261.3" rx="3.2" ry="2.6" stroke="#22d472" stroke-width="1.0" fill="none"/>
<ellipse cx="896.4" cy="266.7" rx="3.2" ry="2.6" stroke="#22d472" stroke-width="1.0" fill="none"/>
<polyline points="966.4,189.0 970.8,196.0 971.0,199.5" stroke="#a4e23c" stroke-width="1.3" fill="none" />
<line x1="971.0" y1="199.0" x2="971.0" y2="348.0" stroke="#bf2029" stroke-width="1.6" />
<rect x="964.4" y="217.8" width="13.2" height="22.0" fill="#f40a12" stroke="none" stroke-width="1" />
<path d="M964.4 239.8 V217.8 H977.6" stroke="#e8e8d8" stroke-width="1.4" fill="none"/>
<path d="M977.6 217.8 V239.8 H964.4" stroke="#a8a8a8" stroke-width="1.4" fill="none"/>
<line x1="965.2" y1="253.4" x2="965.2" y2="267.4" stroke="#22d472" stroke-width="1.0" />
<ellipse cx="965.2" cy="257.6" rx="3.2" ry="2.5" stroke="#22d472" stroke-width="1.0" fill="none"/>
<ellipse cx="965.2" cy="262.8" rx="3.2" ry="2.5" stroke="#22d472" stroke-width="1.0" fill="none"/>
<line x1="976.8" y1="253.4" x2="976.8" y2="267.4" stroke="#22d472" stroke-width="1.0" />
<ellipse cx="976.8" cy="257.6" rx="3.2" ry="2.5" stroke="#22d472" stroke-width="1.0" fill="none"/>
<ellipse cx="976.8" cy="262.8" rx="3.2" ry="2.5" stroke="#22d472" stroke-width="1.0" fill="none"/>
<polyline points="890.6,303.0 890.6,308.2 796.6,308.2 796.6,352.0" stroke="#bf2029" stroke-width="1.6" fill="none" />
<ellipse cx="217.2" cy="371.2" rx="10.0" ry="9.4" stroke="#22b455" stroke-width="1.25" fill="none"/>
<ellipse cx="217.2" cy="357.9" rx="10.0" ry="9.4" stroke="#2fa6c6" stroke-width="1.25" fill="none"/>
<polyline points="213.5,359.9 217.2,353.0 220.9,359.9" stroke="#2fa6c6" stroke-width="1.1" fill="none" />
<line x1="213.2" y1="360.3" x2="221.2" y2="360.3" stroke="#2fd8a4" stroke-width="1.8" />
<polyline points="213.8,368.0 217.2,369.9 220.6,368.0" stroke="#30c8a8" stroke-width="1.2" fill="none" />
<line x1="217.2" y1="369.9" x2="217.2" y2="375.2" stroke="#30d070" stroke-width="1.2" />
<polyline points="214.2,364.3 196.8,364.3 196.8,369.9" stroke="#d8cc58" stroke-width="1.3" fill="none" />
<line x1="195.2" y1="369.9" x2="198.0" y2="369.9" stroke="#d8cc58" stroke-width="1.2" />
<line x1="196.6" y1="372.9" x2="196.6" y2="377.9" stroke="#c4b850" stroke-width="2.4" stroke-dasharray="1.5 1.7"/>
<ellipse cx="458.6" cy="373.3" rx="10.0" ry="9.4" stroke="#22b455" stroke-width="1.25" fill="none"/>
<ellipse cx="458.6" cy="360.0" rx="10.0" ry="9.4" stroke="#2fa6c6" stroke-width="1.25" fill="none"/>
<polyline points="454.9,362.0 458.6,355.1 462.3,362.0" stroke="#2fa6c6" stroke-width="1.1" fill="none" />
<line x1="454.6" y1="362.4" x2="462.6" y2="362.4" stroke="#2fd8a4" stroke-width="1.8" />
<polyline points="455.2,370.1 458.6,372.0 462.0,370.1" stroke="#30c8a8" stroke-width="1.2" fill="none" />
<line x1="458.6" y1="372.0" x2="458.6" y2="377.3" stroke="#30d070" stroke-width="1.2" />
<polyline points="455.6,366.4 438.2,366.4 438.2,372.0" stroke="#d8cc58" stroke-width="1.3" fill="none" />
<line x1="436.6" y1="372.0" x2="439.4" y2="372.0" stroke="#d8cc58" stroke-width="1.2" />
<line x1="438.0" y1="375.0" x2="438.0" y2="380.0" stroke="#c4b850" stroke-width="2.4" stroke-dasharray="1.5 1.7"/>
<ellipse cx="600.2" cy="375.9" rx="10.0" ry="9.4" stroke="#22b455" stroke-width="1.25" fill="none"/>
<ellipse cx="600.2" cy="362.6" rx="10.0" ry="9.4" stroke="#2fa6c6" stroke-width="1.25" fill="none"/>
<polyline points="596.5,364.6 600.2,357.7 603.9,364.6" stroke="#2fa6c6" stroke-width="1.1" fill="none" />
<line x1="596.2" y1="365.0" x2="604.2" y2="365.0" stroke="#2fd8a4" stroke-width="1.8" />
<polyline points="596.8,372.7 600.2,374.6 603.6,372.7" stroke="#30c8a8" stroke-width="1.2" fill="none" />
<line x1="600.2" y1="374.6" x2="600.2" y2="379.9" stroke="#30d070" stroke-width="1.2" />
<polyline points="597.2,369.0 579.8,369.0 579.8,374.6" stroke="#d8cc58" stroke-width="1.3" fill="none" />
<line x1="578.2" y1="374.6" x2="581.0" y2="374.6" stroke="#d8cc58" stroke-width="1.2" />
<line x1="579.6" y1="377.6" x2="579.6" y2="382.6" stroke="#c4b850" stroke-width="2.4" stroke-dasharray="1.5 1.7"/>
<ellipse cx="797.0" cy="374.3" rx="10.0" ry="9.4" stroke="#22b455" stroke-width="1.25" fill="none"/>
<ellipse cx="797.0" cy="361.0" rx="10.0" ry="9.4" stroke="#2fa6c6" stroke-width="1.25" fill="none"/>
<polyline points="793.3,363.0 797.0,356.1 800.7,363.0" stroke="#2fa6c6" stroke-width="1.1" fill="none" />
<line x1="793.0" y1="363.4" x2="801.0" y2="363.4" stroke="#2fd8a4" stroke-width="1.8" />
<polyline points="793.6,371.1 797.0,373.0 800.4,371.1" stroke="#30c8a8" stroke-width="1.2" fill="none" />
<line x1="797.0" y1="373.0" x2="797.0" y2="378.3" stroke="#30d070" stroke-width="1.2" />
<polyline points="794.0,367.4 776.6,367.4 776.6,373.0" stroke="#d8cc58" stroke-width="1.3" fill="none" />
<line x1="775.0" y1="373.0" x2="777.8" y2="373.0" stroke="#d8cc58" stroke-width="1.2" />
<line x1="776.4" y1="376.0" x2="776.4" y2="381.0" stroke="#c4b850" stroke-width="2.4" stroke-dasharray="1.5 1.7"/>
<ellipse cx="970.4" cy="371.0" rx="10.0" ry="9.4" stroke="#22b455" stroke-width="1.25" fill="none"/>
<ellipse cx="970.4" cy="357.7" rx="10.0" ry="9.4" stroke="#2fa6c6" stroke-width="1.25" fill="none"/>
<polyline points="966.7,359.7 970.4,352.8 974.1,359.7" stroke="#2fa6c6" stroke-width="1.1" fill="none" />
<line x1="966.4" y1="360.1" x2="974.4" y2="360.1" stroke="#2fd8a4" stroke-width="1.8" />
<polyline points="967.0,367.8 970.4,369.7 973.8,367.8" stroke="#30c8a8" stroke-width="1.2" fill="none" />
<line x1="970.4" y1="369.7" x2="970.4" y2="375.0" stroke="#30d070" stroke-width="1.2" />
<polyline points="967.4,364.1 950.0,364.1 950.0,369.7" stroke="#d8cc58" stroke-width="1.3" fill="none" />
<line x1="948.4" y1="369.7" x2="951.2" y2="369.7" stroke="#d8cc58" stroke-width="1.2" />
<line x1="949.8" y1="372.7" x2="949.8" y2="377.7" stroke="#c4b850" stroke-width="2.4" stroke-dasharray="1.5 1.7"/>
<line x1="218.1" y1="381.0" x2="218.1" y2="437.0" stroke="#f4a02e" stroke-width="1.6" />
<line x1="459.7" y1="383.0" x2="459.7" y2="437.0" stroke="#f4a02e" stroke-width="1.6" />
<line x1="602.0" y1="385.0" x2="602.0" y2="449.0" stroke="#f4a02e" stroke-width="1.6" />
<line x1="796.6" y1="383.5" x2="796.6" y2="437.0" stroke="#f4a02e" stroke-width="1.6" />
<line x1="970.3" y1="381.0" x2="970.3" y2="437.0" stroke="#f4a02e" stroke-width="1.6" />
<line x1="150.8" y1="437.0" x2="352.8" y2="437.0" stroke="#f6a02c" stroke-width="4.2" />
<line x1="362.2" y1="437.0" x2="510.8" y2="437.0" stroke="#f6a02c" stroke-width="4.2" />
<line x1="526.7" y1="437.0" x2="580.9" y2="437.0" stroke="#f6a02c" stroke-width="4.2" />
<line x1="643.8" y1="437.0" x2="844.6" y2="437.0" stroke="#f6a02c" stroke-width="4.2" />
<line x1="856.6" y1="437.0" x2="1126.4" y2="437.0" stroke="#f6a02c" stroke-width="4.2" />
<line x1="185.3" y1="437.0" x2="185.3" y2="446.0" stroke="#f4a02e" stroke-width="1.5" />
<polyline points="179.0,451.9 185.3,445.5 191.6,451.9" stroke="#7fe62e" stroke-width="1.2" fill="none" />
<polyline points="179.0,455.9 185.3,449.3 191.6,455.9" stroke="#7fe62e" stroke-width="1.2" fill="none" />
<line x1="185.3" y1="449.3" x2="185.3" y2="460.5" stroke="#7fe62e" stroke-width="1.2" />
<line x1="183.5" y1="460.5" x2="187.1" y2="460.5" stroke="#7fe62e" stroke-width="1.6" />
<polyline points="182.3,462.5 185.3,469.5 185.3,480.0" stroke="#7fe62e" stroke-width="1.2" fill="none" />
<polyline points="179.1,471.5 185.3,477.1 191.5,471.5" stroke="#7fe62e" stroke-width="1.2" fill="none" />
<polyline points="179.7,475.1 185.3,480.3 190.9,475.1" stroke="#7fe62e" stroke-width="1.2" fill="none" />
<line x1="185.3" y1="480.0" x2="185.3" y2="521.0" stroke="#f4a02e" stroke-width="1.5" />
<polygon points="181.0,520.4 189.6,520.4 185.3,528.6" fill="#f4a02e"/>
<line x1="269.2" y1="437.0" x2="269.2" y2="446.0" stroke="#f4a02e" stroke-width="1.5" />
<polyline points="262.9,451.9 269.2,445.5 275.5,451.9" stroke="#7fe62e" stroke-width="1.2" fill="none" />
<polyline points="262.9,455.9 269.2,449.3 275.5,455.9" stroke="#7fe62e" stroke-width="1.2" fill="none" />
<line x1="269.2" y1="449.3" x2="269.2" y2="460.5" stroke="#7fe62e" stroke-width="1.2" />
<line x1="267.4" y1="460.5" x2="271.0" y2="460.5" stroke="#7fe62e" stroke-width="1.6" />
<polyline points="266.2,462.5 269.2,469.5 269.2,480.0" stroke="#7fe62e" stroke-width="1.2" fill="none" />
<polyline points="263.0,471.5 269.2,477.1 275.4,471.5" stroke="#7fe62e" stroke-width="1.2" fill="none" />
<polyline points="263.6,475.1 269.2,480.3 274.8,475.1" stroke="#7fe62e" stroke-width="1.2" fill="none" />
<line x1="269.2" y1="480.0" x2="269.2" y2="521.0" stroke="#f4a02e" stroke-width="1.5" />
<polygon points="264.9,520.4 273.5,520.4 269.2,528.6" fill="#f4a02e"/>
<line x1="307.5" y1="437.0" x2="307.5" y2="446.0" stroke="#f4a02e" stroke-width="1.5" />
<polyline points="301.2,451.9 307.5,445.5 313.8,451.9" stroke="#7fe62e" stroke-width="1.2" fill="none" />
<polyline points="301.2,455.9 307.5,449.3 313.8,455.9" stroke="#7fe62e" stroke-width="1.2" fill="none" />
<line x1="307.5" y1="449.3" x2="307.5" y2="460.5" stroke="#7fe62e" stroke-width="1.2" />
<line x1="305.7" y1="460.5" x2="309.3" y2="460.5" stroke="#7fe62e" stroke-width="1.6" />
<polyline points="304.5,462.5 307.5,469.5 307.5,480.0" stroke="#7fe62e" stroke-width="1.2" fill="none" />
<polyline points="301.3,471.5 307.5,477.1 313.7,471.5" stroke="#7fe62e" stroke-width="1.2" fill="none" />
<polyline points="301.9,475.1 307.5,480.3 313.1,475.1" stroke="#7fe62e" stroke-width="1.2" fill="none" />
<line x1="307.5" y1="480.0" x2="307.5" y2="521.0" stroke="#f4a02e" stroke-width="1.5" />
<polygon points="303.2,520.4 311.8,520.4 307.5,528.6" fill="#f4a02e"/>
<line x1="394.4" y1="437.0" x2="394.4" y2="446.0" stroke="#f4a02e" stroke-width="1.5" />
<polyline points="388.1,451.9 394.4,445.5 400.7,451.9" stroke="#7fe62e" stroke-width="1.2" fill="none" />
<polyline points="388.1,455.9 394.4,449.3 400.7,455.9" stroke="#7fe62e" stroke-width="1.2" fill="none" />
<line x1="394.4" y1="449.3" x2="394.4" y2="460.5" stroke="#7fe62e" stroke-width="1.2" />
<line x1="392.6" y1="460.5" x2="396.2" y2="460.5" stroke="#7fe62e" stroke-width="1.6" />
<polyline points="391.4,462.5 394.4,469.5 394.4,480.0" stroke="#7fe62e" stroke-width="1.2" fill="none" />
<polyline points="388.2,471.5 394.4,477.1 400.6,471.5" stroke="#7fe62e" stroke-width="1.2" fill="none" />
<polyline points="388.8,475.1 394.4,480.3 400.0,475.1" stroke="#7fe62e" stroke-width="1.2" fill="none" />
<line x1="394.4" y1="480.0" x2="394.4" y2="521.0" stroke="#f4a02e" stroke-width="1.5" />
<polygon points="390.1,520.4 398.7,520.4 394.4,528.6" fill="#f4a02e"/>
<line x1="432.1" y1="437.0" x2="432.1" y2="446.0" stroke="#f4a02e" stroke-width="1.5" />
<polyline points="425.8,451.9 432.1,445.5 438.4,451.9" stroke="#7fe62e" stroke-width="1.2" fill="none" />
<polyline points="425.8,455.9 432.1,449.3 438.4,455.9" stroke="#7fe62e" stroke-width="1.2" fill="none" />
<line x1="432.1" y1="449.3" x2="432.1" y2="460.5" stroke="#7fe62e" stroke-width="1.2" />
<line x1="430.3" y1="460.5" x2="433.9" y2="460.5" stroke="#7fe62e" stroke-width="1.6" />
<polyline points="429.1,462.5 432.1,469.5 432.1,480.0" stroke="#7fe62e" stroke-width="1.2" fill="none" />
<polyline points="425.9,471.5 432.1,477.1 438.3,471.5" stroke="#7fe62e" stroke-width="1.2" fill="none" />
<polyline points="426.5,475.1 432.1,480.3 437.7,475.1" stroke="#7fe62e" stroke-width="1.2" fill="none" />
<line x1="432.1" y1="480.0" x2="432.1" y2="521.0" stroke="#f4a02e" stroke-width="1.5" />
<polygon points="427.8,520.4 436.4,520.4 432.1,528.6" fill="#f4a02e"/>
<line x1="551.9" y1="437.0" x2="551.9" y2="446.0" stroke="#f4a02e" stroke-width="1.5" />
<polyline points="545.6,451.9 551.9,445.5 558.2,451.9" stroke="#7fe62e" stroke-width="1.2" fill="none" />
<polyline points="545.6,455.9 551.9,449.3 558.2,455.9" stroke="#7fe62e" stroke-width="1.2" fill="none" />
<line x1="551.9" y1="449.3" x2="551.9" y2="460.5" stroke="#7fe62e" stroke-width="1.2" />
<line x1="550.1" y1="460.5" x2="553.7" y2="460.5" stroke="#7fe62e" stroke-width="1.6" />
<polyline points="548.9,462.5 551.9,469.5 551.9,480.0" stroke="#7fe62e" stroke-width="1.2" fill="none" />
<polyline points="545.7,471.5 551.9,477.1 558.1,471.5" stroke="#7fe62e" stroke-width="1.2" fill="none" />
<polyline points="546.3,475.1 551.9,480.3 557.5,475.1" stroke="#7fe62e" stroke-width="1.2" fill="none" />
<line x1="551.9" y1="480.0" x2="551.9" y2="521.0" stroke="#f4a02e" stroke-width="1.5" />
<polygon points="547.6,520.4 556.2,520.4 551.9,528.6" fill="#f4a02e"/>
<line x1="698.3" y1="437.0" x2="698.3" y2="447.1" stroke="#f4a02e" stroke-width="1.5" />
<polyline points="692.0,453.0 698.3,446.6 704.6,453.0" stroke="#7fe62e" stroke-width="1.2" fill="none" />
<polyline points="692.0,457.0 698.3,450.4 704.6,457.0" stroke="#7fe62e" stroke-width="1.2" fill="none" />
<line x1="698.3" y1="450.4" x2="698.3" y2="461.6" stroke="#7fe62e" stroke-width="1.2" />
<line x1="696.5" y1="461.6" x2="700.1" y2="461.6" stroke="#7fe62e" stroke-width="1.6" />
<polyline points="695.3,463.6 698.3,470.6 698.3,481.1" stroke="#7fe62e" stroke-width="1.2" fill="none" />
<polyline points="692.1,472.6 698.3,478.2 704.5,472.6" stroke="#7fe62e" stroke-width="1.2" fill="none" />
<polyline points="692.7,476.2 698.3,481.4 703.9,476.2" stroke="#7fe62e" stroke-width="1.2" fill="none" />
<line x1="698.3" y1="481.1" x2="698.3" y2="521.0" stroke="#f4a02e" stroke-width="1.5" />
<polygon points="694.0,520.4 702.6,520.4 698.3,528.6" fill="#f4a02e"/>
<line x1="723.8" y1="437.0" x2="723.8" y2="447.1" stroke="#f4a02e" stroke-width="1.5" />
<polyline points="717.5,453.0 723.8,446.6 730.1,453.0" stroke="#7fe62e" stroke-width="1.2" fill="none" />
<polyline points="717.5,457.0 723.8,450.4 730.1,457.0" stroke="#7fe62e" stroke-width="1.2" fill="none" />
<line x1="723.8" y1="450.4" x2="723.8" y2="461.6" stroke="#7fe62e" stroke-width="1.2" />
<line x1="722.0" y1="461.6" x2="725.6" y2="461.6" stroke="#7fe62e" stroke-width="1.6" />
<polyline points="720.8,463.6 723.8,470.6 723.8,481.1" stroke="#7fe62e" stroke-width="1.2" fill="none" />
<polyline points="717.6,472.6 723.8,478.2 730.0,472.6" stroke="#7fe62e" stroke-width="1.2" fill="none" />
<polyline points="718.2,476.2 723.8,481.4 729.4,476.2" stroke="#7fe62e" stroke-width="1.2" fill="none" />
<line x1="723.8" y1="481.1" x2="723.8" y2="521.0" stroke="#f4a02e" stroke-width="1.5" />
<polygon points="719.5,520.4 728.1,520.4 723.8,528.6" fill="#f4a02e"/>
<line x1="752.0" y1="437.0" x2="752.0" y2="447.1" stroke="#f4a02e" stroke-width="1.5" />
<polyline points="745.7,453.0 752.0,446.6 758.3,453.0" stroke="#7fe62e" stroke-width="1.2" fill="none" />
<polyline points="745.7,457.0 752.0,450.4 758.3,457.0" stroke="#7fe62e" stroke-width="1.2" fill="none" />
<line x1="752.0" y1="450.4" x2="752.0" y2="461.6" stroke="#7fe62e" stroke-width="1.2" />
<line x1="750.2" y1="461.6" x2="753.8" y2="461.6" stroke="#7fe62e" stroke-width="1.6" />
<polyline points="749.0,463.6 752.0,470.6 752.0,481.1" stroke="#7fe62e" stroke-width="1.2" fill="none" />
<polyline points="745.8,472.6 752.0,478.2 758.2,472.6" stroke="#7fe62e" stroke-width="1.2" fill="none" />
<polyline points="746.4,476.2 752.0,481.4 757.6,476.2" stroke="#7fe62e" stroke-width="1.2" fill="none" />
<line x1="752.0" y1="481.1" x2="752.0" y2="521.0" stroke="#f4a02e" stroke-width="1.5" />
<polygon points="747.7,520.4 756.3,520.4 752.0,528.6" fill="#f4a02e"/>
<line x1="778.4" y1="437.0" x2="778.4" y2="447.1" stroke="#f4a02e" stroke-width="1.5" />
<polyline points="772.1,453.0 778.4,446.6 784.7,453.0" stroke="#7fe62e" stroke-width="1.2" fill="none" />
<polyline points="772.1,457.0 778.4,450.4 784.7,457.0" stroke="#7fe62e" stroke-width="1.2" fill="none" />
<line x1="778.4" y1="450.4" x2="778.4" y2="461.6" stroke="#7fe62e" stroke-width="1.2" />
<line x1="776.6" y1="461.6" x2="780.2" y2="461.6" stroke="#7fe62e" stroke-width="1.6" />
<polyline points="775.4,463.6 778.4,470.6 778.4,481.1" stroke="#7fe62e" stroke-width="1.2" fill="none" />
<polyline points="772.2,472.6 778.4,478.2 784.6,472.6" stroke="#7fe62e" stroke-width="1.2" fill="none" />
<polyline points="772.8,476.2 778.4,481.4 784.0,476.2" stroke="#7fe62e" stroke-width="1.2" fill="none" />
<line x1="778.4" y1="481.1" x2="778.4" y2="521.0" stroke="#f4a02e" stroke-width="1.5" />
<polygon points="774.1,520.4 782.7,520.4 778.4,528.6" fill="#f4a02e"/>
<line x1="922.7" y1="437.0" x2="922.7" y2="447.1" stroke="#f4a02e" stroke-width="1.5" />
<polyline points="916.4,453.0 922.7,446.6 929.0,453.0" stroke="#7fe62e" stroke-width="1.2" fill="none" />
<polyline points="916.4,457.0 922.7,450.4 929.0,457.0" stroke="#7fe62e" stroke-width="1.2" fill="none" />
<line x1="922.7" y1="450.4" x2="922.7" y2="461.6" stroke="#7fe62e" stroke-width="1.2" />
<line x1="920.9" y1="461.6" x2="924.5" y2="461.6" stroke="#7fe62e" stroke-width="1.6" />
<polyline points="919.7,463.6 922.7,470.6 922.7,481.1" stroke="#7fe62e" stroke-width="1.2" fill="none" />
<polyline points="916.5,472.6 922.7,478.2 928.9,472.6" stroke="#7fe62e" stroke-width="1.2" fill="none" />
<polyline points="917.1,476.2 922.7,481.4 928.3,476.2" stroke="#7fe62e" stroke-width="1.2" fill="none" />
<line x1="922.7" y1="481.1" x2="922.7" y2="521.0" stroke="#f4a02e" stroke-width="1.5" />
<polygon points="918.4,520.4 927.0,520.4 922.7,528.6" fill="#f4a02e"/>
<line x1="950.0" y1="437.0" x2="950.0" y2="447.1" stroke="#f4a02e" stroke-width="1.5" />
<polyline points="943.7,453.0 950.0,446.6 956.3,453.0" stroke="#7fe62e" stroke-width="1.2" fill="none" />
<polyline points="943.7,457.0 950.0,450.4 956.3,457.0" stroke="#7fe62e" stroke-width="1.2" fill="none" />
<line x1="950.0" y1="450.4" x2="950.0" y2="461.6" stroke="#7fe62e" stroke-width="1.2" />
<line x1="948.2" y1="461.6" x2="951.8" y2="461.6" stroke="#7fe62e" stroke-width="1.6" />
<polyline points="947.0,463.6 950.0,470.6 950.0,481.1" stroke="#7fe62e" stroke-width="1.2" fill="none" />
<polyline points="943.8,472.6 950.0,478.2 956.2,472.6" stroke="#7fe62e" stroke-width="1.2" fill="none" />
<polyline points="944.4,476.2 950.0,481.4 955.6,476.2" stroke="#7fe62e" stroke-width="1.2" fill="none" />
<line x1="950.0" y1="481.1" x2="950.0" y2="521.0" stroke="#f4a02e" stroke-width="1.5" />
<polygon points="945.7,520.4 954.3,520.4 950.0,528.6" fill="#f4a02e"/>
<line x1="1003.4" y1="437.0" x2="1003.4" y2="447.1" stroke="#f4a02e" stroke-width="1.5" />
<polyline points="997.1,453.0 1003.4,446.6 1009.7,453.0" stroke="#7fe62e" stroke-width="1.2" fill="none" />
<polyline points="997.1,457.0 1003.4,450.4 1009.7,457.0" stroke="#7fe62e" stroke-width="1.2" fill="none" />
<line x1="1003.4" y1="450.4" x2="1003.4" y2="461.6" stroke="#7fe62e" stroke-width="1.2" />
<line x1="1001.6" y1="461.6" x2="1005.2" y2="461.6" stroke="#7fe62e" stroke-width="1.6" />
<polyline points="1000.4,463.6 1003.4,470.6 1003.4,481.1" stroke="#7fe62e" stroke-width="1.2" fill="none" />
<polyline points="997.2,472.6 1003.4,478.2 1009.6,472.6" stroke="#7fe62e" stroke-width="1.2" fill="none" />
<polyline points="997.8,476.2 1003.4,481.4 1009.0,476.2" stroke="#7fe62e" stroke-width="1.2" fill="none" />
<line x1="1003.4" y1="481.1" x2="1003.4" y2="521.0" stroke="#f4a02e" stroke-width="1.5" />
<polygon points="999.1,520.4 1007.7,520.4 1003.4,528.6" fill="#f4a02e"/>
<line x1="1027.4" y1="437.0" x2="1027.4" y2="447.1" stroke="#f4a02e" stroke-width="1.5" />
<polyline points="1021.1,453.0 1027.4,446.6 1033.7,453.0" stroke="#7fe62e" stroke-width="1.2" fill="none" />
<polyline points="1021.1,457.0 1027.4,450.4 1033.7,457.0" stroke="#7fe62e" stroke-width="1.2" fill="none" />
<line x1="1027.4" y1="450.4" x2="1027.4" y2="461.6" stroke="#7fe62e" stroke-width="1.2" />
<line x1="1025.6" y1="461.6" x2="1029.2" y2="461.6" stroke="#7fe62e" stroke-width="1.6" />
<polyline points="1024.4,463.6 1027.4,470.6 1027.4,481.1" stroke="#7fe62e" stroke-width="1.2" fill="none" />
<polyline points="1021.2,472.6 1027.4,478.2 1033.6,472.6" stroke="#7fe62e" stroke-width="1.2" fill="none" />
<polyline points="1021.8,476.2 1027.4,481.4 1033.0,476.2" stroke="#7fe62e" stroke-width="1.2" fill="none" />
<line x1="1027.4" y1="481.1" x2="1027.4" y2="521.0" stroke="#f4a02e" stroke-width="1.5" />
<polygon points="1023.1,520.4 1031.7,520.4 1027.4,528.6" fill="#f4a02e"/>
<line x1="1053.8" y1="437.0" x2="1053.8" y2="447.1" stroke="#f4a02e" stroke-width="1.5" />
<polyline points="1047.5,453.0 1053.8,446.6 1060.1,453.0" stroke="#7fe62e" stroke-width="1.2" fill="none" />
<polyline points="1047.5,457.0 1053.8,450.4 1060.1,457.0" stroke="#7fe62e" stroke-width="1.2" fill="none" />
<line x1="1053.8" y1="450.4" x2="1053.8" y2="461.6" stroke="#7fe62e" stroke-width="1.2" />
<line x1="1052.0" y1="461.6" x2="1055.6" y2="461.6" stroke="#7fe62e" stroke-width="1.6" />
<polyline points="1050.8,463.6 1053.8,470.6 1053.8,481.1" stroke="#7fe62e" stroke-width="1.2" fill="none" />
<polyline points="1047.6,472.6 1053.8,478.2 1060.0,472.6" stroke="#7fe62e" stroke-width="1.2" fill="none" />
<polyline points="1048.2,476.2 1053.8,481.4 1059.4,476.2" stroke="#7fe62e" stroke-width="1.2" fill="none" />
<line x1="1053.8" y1="481.1" x2="1053.8" y2="521.0" stroke="#f4a02e" stroke-width="1.5" />
<polygon points="1049.5,520.4 1058.1,520.4 1053.8,528.6" fill="#f4a02e"/>
<line x1="1079.4" y1="437.0" x2="1079.4" y2="447.1" stroke="#f4a02e" stroke-width="1.5" />
<polyline points="1073.1,453.0 1079.4,446.6 1085.7,453.0" stroke="#7fe62e" stroke-width="1.2" fill="none" />
<polyline points="1073.1,457.0 1079.4,450.4 1085.7,457.0" stroke="#7fe62e" stroke-width="1.2" fill="none" />
<line x1="1079.4" y1="450.4" x2="1079.4" y2="461.6" stroke="#7fe62e" stroke-width="1.2" />
<line x1="1077.6" y1="461.6" x2="1081.2" y2="461.6" stroke="#7fe62e" stroke-width="1.6" />
<polyline points="1076.4,463.6 1079.4,470.6 1079.4,481.1" stroke="#7fe62e" stroke-width="1.2" fill="none" />
<polyline points="1073.2,472.6 1079.4,478.2 1085.6,472.6" stroke="#7fe62e" stroke-width="1.2" fill="none" />
<polyline points="1073.8,476.2 1079.4,481.4 1085.0,476.2" stroke="#7fe62e" stroke-width="1.2" fill="none" />
<line x1="1079.4" y1="481.1" x2="1079.4" y2="521.0" stroke="#f4a02e" stroke-width="1.5" />
<polygon points="1075.1,520.4 1083.7,520.4 1079.4,528.6" fill="#f4a02e"/>
<line x1="1104.7" y1="437.0" x2="1104.7" y2="447.1" stroke="#f4a02e" stroke-width="1.5" />
<polyline points="1098.4,453.0 1104.7,446.6 1111.0,453.0" stroke="#7fe62e" stroke-width="1.2" fill="none" />
<polyline points="1098.4,457.0 1104.7,450.4 1111.0,457.0" stroke="#7fe62e" stroke-width="1.2" fill="none" />
<line x1="1104.7" y1="450.4" x2="1104.7" y2="461.6" stroke="#7fe62e" stroke-width="1.2" />
<line x1="1102.9" y1="461.6" x2="1106.5" y2="461.6" stroke="#7fe62e" stroke-width="1.6" />
<polyline points="1101.7,463.6 1104.7,470.6 1104.7,481.1" stroke="#7fe62e" stroke-width="1.2" fill="none" />
<polyline points="1098.5,472.6 1104.7,478.2 1110.9,472.6" stroke="#7fe62e" stroke-width="1.2" fill="none" />
<polyline points="1099.1,476.2 1104.7,481.4 1110.3,476.2" stroke="#7fe62e" stroke-width="1.2" fill="none" />
<line x1="1104.7" y1="481.1" x2="1104.7" y2="521.0" stroke="#f4a02e" stroke-width="1.5" />
<polygon points="1100.4,520.4 1109.0,520.4 1104.7,528.6" fill="#f4a02e"/>
<line x1="671.4" y1="437.0" x2="671.4" y2="453.5" stroke="#f4a02e" stroke-width="1.5" />
<polyline points="665.1,459.9 671.4,453.5 677.7,459.9" stroke="#7fe62e" stroke-width="1.2" fill="none" />
<polyline points="665.1,463.9 671.4,457.3 677.7,463.9" stroke="#7fe62e" stroke-width="1.2" fill="none" />
<line x1="671.4" y1="457.3" x2="671.4" y2="468.5" stroke="#7fe62e" stroke-width="1.2" />
<line x1="669.6" y1="468.5" x2="673.2" y2="468.5" stroke="#7fe62e" stroke-width="1.6" />
<polyline points="668.4,470.5 671.4,477.5 671.4,488.0" stroke="#7fe62e" stroke-width="1.2" fill="none" />
<polyline points="665.2,479.5 671.4,485.1 677.6,479.5" stroke="#7fe62e" stroke-width="1.2" fill="none" />
<polyline points="665.8,483.1 671.4,488.3 677.0,483.1" stroke="#7fe62e" stroke-width="1.2" fill="none" />
<path d="M671.4 488.5 V493 C670.4 495.5 664.9 494.5 665.1 498.8 C665.4 503 670.4 503.5 671.4 503.4 C675.4 503.2 677.7 501.5 677.4 499.6 C677.0 498 672.4 498.3 671.7 499.5 V506" stroke="#2fa6c6" stroke-width="1.2" fill="none"/>
<polyline points="671.9,506.5 664.2,522.0 679.6,522.0 671.9,506.5" stroke="#22e044" stroke-width="1.4" fill="none" />
<circle cx="668.0" cy="514.2" r="1.6" fill="#22e044"/>
<circle cx="675.8" cy="514.2" r="1.6" fill="#22e044"/>
<circle cx="671.9" cy="522.0" r="1.6" fill="#22e044"/>
<line x1="896.0" y1="437.0" x2="896.0" y2="453.5" stroke="#f4a02e" stroke-width="1.5" />
<polyline points="889.7,459.9 896.0,453.5 902.3,459.9" stroke="#7fe62e" stroke-width="1.2" fill="none" />
<polyline points="889.7,463.9 896.0,457.3 902.3,463.9" stroke="#7fe62e" stroke-width="1.2" fill="none" />
<line x1="896.0" y1="457.3" x2="896.0" y2="468.5" stroke="#7fe62e" stroke-width="1.2" />
<line x1="894.2" y1="468.5" x2="897.8" y2="468.5" stroke="#7fe62e" stroke-width="1.6" />
<polyline points="893.0,470.5 896.0,477.5 896.0,488.0" stroke="#7fe62e" stroke-width="1.2" fill="none" />
<polyline points="889.8,479.5 896.0,485.1 902.2,479.5" stroke="#7fe62e" stroke-width="1.2" fill="none" />
<polyline points="890.4,483.1 896.0,488.3 901.6,483.1" stroke="#7fe62e" stroke-width="1.2" fill="none" />
<path d="M896.0 488.5 V493 C895.0 495.5 889.5 494.5 889.7 498.8 C890.0 503 895.0 503.5 896.0 503.4 C900.0 503.2 902.3 501.5 902.0 499.6 C901.6 498 897.0 498.3 896.3 499.5 V506" stroke="#2fa6c6" stroke-width="1.2" fill="none"/>
<polyline points="896.5,506.5 888.8,522.0 904.2,522.0 896.5,506.5" stroke="#22e044" stroke-width="1.4" fill="none" />
<circle cx="892.6" cy="514.2" r="1.6" fill="#22e044"/>
<circle cx="900.4" cy="514.2" r="1.6" fill="#22e044"/>
<circle cx="896.5" cy="522.0" r="1.6" fill="#22e044"/>
<polyline points="218.1,437.0 218.1,482.0 238.4,482.0 238.4,465.0" stroke="#f4a02e" stroke-width="1.5" fill="none" />
<line x1="238.4" y1="437.0" x2="238.4" y2="449.0" stroke="#f4a02e" stroke-width="1.5" />
<line x1="236.6" y1="451.0" x2="240.2" y2="451.0" stroke="#7fe62e" stroke-width="1.8" />
<line x1="238.4" y1="448.6" x2="238.4" y2="451.0" stroke="#7fe62e" stroke-width="1.2" />
<polyline points="235.0,453.6 238.4,460.6 238.4,465.0" stroke="#7fe62e" stroke-width="1.2" fill="none" />
<polyline points="347.8,437.0 347.8,482.0 367.5,482.0 367.5,465.0" stroke="#f4a02e" stroke-width="1.5" fill="none" />
<line x1="367.5" y1="437.0" x2="367.5" y2="449.0" stroke="#f4a02e" stroke-width="1.5" />
<line x1="365.7" y1="451.0" x2="369.3" y2="451.0" stroke="#7fe62e" stroke-width="1.8" />
<line x1="367.5" y1="448.6" x2="367.5" y2="451.0" stroke="#7fe62e" stroke-width="1.2" />
<polyline points="364.1,453.6 367.5,460.6 367.5,465.0" stroke="#7fe62e" stroke-width="1.2" fill="none" />
<polyline points="459.7,437.0 459.7,482.0 484.4,482.0 484.4,465.0" stroke="#f4a02e" stroke-width="1.5" fill="none" />
<line x1="484.4" y1="437.0" x2="484.4" y2="449.0" stroke="#f4a02e" stroke-width="1.5" />
<line x1="482.6" y1="451.0" x2="486.2" y2="451.0" stroke="#7fe62e" stroke-width="1.8" />
<line x1="484.4" y1="448.6" x2="484.4" y2="451.0" stroke="#7fe62e" stroke-width="1.2" />
<polyline points="481.0,453.6 484.4,460.6 484.4,465.0" stroke="#7fe62e" stroke-width="1.2" fill="none" />
<polyline points="504.0,437.0 504.0,482.0 529.2,482.0 529.2,465.0" stroke="#f4a02e" stroke-width="1.5" fill="none" />
<line x1="529.2" y1="437.0" x2="529.2" y2="449.0" stroke="#f4a02e" stroke-width="1.5" />
<line x1="527.4" y1="451.0" x2="531.0" y2="451.0" stroke="#7fe62e" stroke-width="1.8" />
<line x1="529.2" y1="448.6" x2="529.2" y2="451.0" stroke="#7fe62e" stroke-width="1.2" />
<polyline points="525.8,453.6 529.2,460.6 529.2,465.0" stroke="#7fe62e" stroke-width="1.2" fill="none" />
<polyline points="575.6,437.0 575.6,482.0 602.0,482.0 602.0,465.0" stroke="#f4a02e" stroke-width="1.5" fill="none" />
<line x1="600.2" y1="451.0" x2="603.8" y2="451.0" stroke="#7fe62e" stroke-width="1.8" />
<line x1="602.0" y1="448.6" x2="602.0" y2="451.0" stroke="#7fe62e" stroke-width="1.2" />
<polyline points="598.6,453.6 602.0,460.6 602.0,465.0" stroke="#7fe62e" stroke-width="1.2" fill="none" />
<polyline points="796.6,437.0 796.6,482.0 817.6,482.0 817.6,465.0" stroke="#f4a02e" stroke-width="1.5" fill="none" />
<line x1="817.6" y1="437.0" x2="817.6" y2="449.0" stroke="#f4a02e" stroke-width="1.5" />
<line x1="815.8" y1="451.0" x2="819.4" y2="451.0" stroke="#7fe62e" stroke-width="1.8" />
<line x1="817.6" y1="448.6" x2="817.6" y2="451.0" stroke="#7fe62e" stroke-width="1.2" />
<polyline points="814.2,453.6 817.6,460.6 817.6,465.0" stroke="#7fe62e" stroke-width="1.2" fill="none" />
<polyline points="842.3,437.0 842.3,482.0 862.4,482.0 862.4,465.0" stroke="#f4a02e" stroke-width="1.5" fill="none" />
<line x1="862.4" y1="437.0" x2="862.4" y2="449.0" stroke="#f4a02e" stroke-width="1.5" />
<line x1="860.6" y1="451.0" x2="864.2" y2="451.0" stroke="#7fe62e" stroke-width="1.8" />
<line x1="862.4" y1="448.6" x2="862.4" y2="451.0" stroke="#7fe62e" stroke-width="1.2" />
<polyline points="859.0,453.6 862.4,460.6 862.4,465.0" stroke="#7fe62e" stroke-width="1.2" fill="none" />
<polyline points="970.3,437.0 970.3,482.0 988.8,482.0 988.8,465.0" stroke="#f4a02e" stroke-width="1.5" fill="none" />
<line x1="988.8" y1="437.0" x2="988.8" y2="449.0" stroke="#f4a02e" stroke-width="1.5" />
<line x1="987.0" y1="451.0" x2="990.6" y2="451.0" stroke="#7fe62e" stroke-width="1.8" />
<line x1="988.8" y1="448.6" x2="988.8" y2="451.0" stroke="#7fe62e" stroke-width="1.2" />
<polyline points="985.4,453.6 988.8,460.6 988.8,465.0" stroke="#7fe62e" stroke-width="1.2" fill="none" />
</svg>
<div class="v" style="left:264px;top:199px;color:#bcbc74;font-size:12px">0.0</div>
<div class="v" style="left:264px;top:219px;color:#3e7680;font-size:12px">0.0</div>
<div class="v" style="left:264px;top:240px;color:#c4626a;font-size:12px">0.0</div>
<div class="v" style="left:723.4px;top:199px;color:#bcbc74;font-size:12px">0.0</div>
<div class="v" style="left:723.4px;top:218px;color:#3e7680;font-size:12px">0.0</div>
<div class="v" style="left:723.4px;top:236px;color:#c4626a;font-size:12px">0.0</div>
<div class="v" style="left:242px;top:340px;color:#bcbc74;font-size:12px">0.0</div>
<div class="v" style="left:242px;top:356px;color:#3e7680;font-size:12px">0.0</div>
<div class="v" style="left:242px;top:372px;color:#c4626a;font-size:12px">0.0</div>
<div class="v" style="left:474.8px;top:340px;color:#bcbc74;font-size:12px">0.0</div>
<div class="v" style="left:474.8px;top:355px;color:#3e7680;font-size:12px">0.0</div>
<div class="v" style="left:474.8px;top:370px;color:#c4626a;font-size:12px">0.0</div>
<div class="v" style="left:617.8px;top:340px;color:#bcbc74;font-size:12px">0.0</div>
<div class="v" style="left:617.8px;top:355px;color:#3e7680;font-size:12px">0.0</div>
<div class="v" style="left:617.8px;top:370px;color:#c4626a;font-size:12px">0.0</div>
<div class="v" style="left:815px;top:340px;color:#bcbc74;font-size:12px">0.0</div>
<div class="v" style="left:815px;top:355px;color:#3e7680;font-size:12px">0.0</div>
<div class="v" style="left:815px;top:370px;color:#c4626a;font-size:12px">0.0</div>
<div class="v" style="left:992.2px;top:340px;color:#bcbc74;font-size:12px">0.0</div>
<div class="v" style="left:992.2px;top:355px;color:#3e7680;font-size:12px">0.0</div>
<div class="v" style="left:992.2px;top:370px;color:#c4626a;font-size:12px">0.0</div>
<div class="v" style="left:379px;top:150px;color:#f4f45a;font-size:12px">0.0</div>
<div class="v" style="left:447.6px;top:150px;color:#f4f45a;font-size:11px">V</div>
<div class="v" style="left:904px;top:150px;color:#f4f45a;font-size:12px">0.0</div>
<div class="v" style="left:957px;top:150px;color:#f4f45a;font-size:11px">V</div>
<div class="lb" style="top:142px;font-size:11.20px;line-height:12px;height:12px;background:#000;left:208.2px;transform:translateX(-50%) scaleX(1.062);">Incoming</div>
<div class="lb" style="top:155px;font-size:11.20px;line-height:12px;height:12px;background:#000;left:208.2px;transform:translateX(-50%) scaleX(1.062);">line</div>
<div class="lb" style="top:142px;font-size:11.20px;line-height:12px;height:12px;background:#000;left:270.4px;transform-origin:0 50%;transform:scaleX(1.062);">10kVI</div>
<div class="lb" style="top:155px;font-size:11.20px;line-height:12px;height:12px;background:#000;left:270.4px;transform-origin:0 50%;transform:scaleX(1.062);">segment</div>
<div class="lb" style="top:164px;font-size:11.20px;line-height:12px;height:12px;background:#000;left:273.5px;transform-origin:0 50%;transform:scaleX(1.062);">1# high</div>
<div class="lb" style="top:177px;font-size:11.20px;line-height:12px;height:12px;background:#000;left:273.5px;transform-origin:0 50%;transform:scaleX(1.062);">configuration</div>
<div class="lb" style="top:164px;font-size:11.20px;line-height:12px;height:12px;left:425.2px;transform:translateX(-50%) scaleX(1.062);">2# high</div>
<div class="lb" style="top:177px;font-size:11.20px;line-height:12px;height:12px;background:#000;left:425.2px;transform:translateX(-50%) scaleX(1.062);">configuration</div>
<div class="lb" style="top:164px;font-size:11.20px;line-height:12px;height:12px;left:503.3px;transform:translateX(-50%) scaleX(1.062);">3# high</div>
<div class="lb" style="top:177px;font-size:11.20px;line-height:12px;height:12px;background:#000;left:503.3px;transform:translateX(-50%) scaleX(1.062);">configuration</div>
<div class="lb" style="top:164px;font-size:11.20px;line-height:12px;height:12px;left:560.6px;transform:translateX(-50%) scaleX(1.062);">4# high</div>
<div class="lb" style="top:177px;font-size:11.20px;line-height:12px;height:12px;background:#000;left:560.6px;transform:translateX(-50%) scaleX(1.062);">configuration</div>
<div class="lb" style="top:164px;font-size:11.20px;line-height:12px;height:12px;left:740.6px;transform:translateX(-50%) scaleX(1.062);">5# high</div>
<div class="lb" style="top:177px;font-size:11.20px;line-height:12px;height:12px;background:#000;left:740.6px;transform:translateX(-50%) scaleX(1.062);">configuration</div>
<div class="lb" style="top:142px;font-size:11.20px;line-height:12px;height:12px;background:#000;left:818.4px;transform-origin:0 50%;transform:scaleX(1.062);">10kV</div>
<div class="lb" style="top:155px;font-size:11.20px;line-height:12px;height:12px;background:#000;left:818.4px;transform-origin:0 50%;transform:scaleX(1.062);">Section II</div>
<div class="lb" style="top:164px;font-size:11.20px;line-height:12px;height:12px;background:#000;left:827.6px;transform-origin:0 50%;transform:scaleX(1.062);">6# high</div>
<div class="lb" style="top:177px;font-size:11.20px;line-height:12px;height:12px;background:#000;left:827.6px;transform-origin:0 50%;transform:scaleX(1.062);">configuration</div>
<div class="lb" style="top:164px;font-size:11.20px;line-height:12px;height:12px;left:959.6px;transform:translateX(-50%) scaleX(1.062);">7# high</div>
<div class="lb" style="top:177px;font-size:11.20px;line-height:12px;height:12px;background:#000;left:959.6px;transform:translateX(-50%) scaleX(1.062);">configuration</div>
<div class="lb" style="top:287px;font-size:11.20px;line-height:12px;height:12px;background:#000;left:306.2px;transform:translateX(-50%) scaleX(1.062);">1# main</div>
<div class="lb" style="top:300px;font-size:11.20px;line-height:12px;height:12px;background:#000;left:306.2px;transform:translateX(-50%) scaleX(1.062);">transformer</div>
<div class="lb" style="top:287px;font-size:11.20px;line-height:12px;height:12px;left:500.8px;transform:translateX(-50%) scaleX(1.062);">2# main</div>
<div class="lb" style="top:300px;font-size:11.20px;line-height:12px;height:12px;background:#000;left:500.8px;transform:translateX(-50%) scaleX(1.062);">transformer</div>
<div class="lb" style="top:287px;font-size:11.20px;line-height:12px;height:12px;left:579.3px;transform:translateX(-50%) scaleX(1.062);">3# main</div>
<div class="lb" style="top:300px;font-size:11.20px;line-height:12px;height:12px;left:579.3px;transform:translateX(-50%) scaleX(1.062);">transformer</div>
<div class="lb" style="top:287px;font-size:11.20px;line-height:12px;height:12px;left:870.0px;transform:translateX(-50%) scaleX(1.062);">4# main</div>
<div class="lb" style="top:300px;font-size:11.20px;line-height:12px;height:12px;background:#000;left:870.0px;transform:translateX(-50%) scaleX(1.062);">transformer</div>
<div class="lb" style="top:288px;font-size:11.20px;line-height:12px;height:12px;left:961.2px;transform:translateX(-50%) scaleX(1.062);">5# main</div>
<div class="lb" style="top:301px;font-size:11.20px;line-height:12px;height:12px;left:961.2px;transform:translateX(-50%) scaleX(1.062);">transformer</div>
<div class="lb" style="top:490px;font-size:11.20px;line-height:12px;height:12px;left:215.3px;transform-origin:0 50%;transform:scaleX(1.062);">Low</div>
<div class="lb" style="top:503px;font-size:11.20px;line-height:12px;height:12px;left:215.3px;transform-origin:0 50%;transform:scaleX(1.062);">voltage</div>
<div class="lb" style="top:510px;font-size:11.20px;line-height:12px;height:12px;background:#000;left:215.9px;transform-origin:0 50%;transform:scaleX(1.062);padding-right:1px;">Total</div>
<div class="lb" style="top:490px;font-size:11.20px;line-height:12px;height:12px;left:458.4px;transform-origin:0 50%;transform:scaleX(1.062);">Low</div>
<div class="lb" style="top:503px;font-size:11.20px;line-height:12px;height:12px;left:458.4px;transform-origin:0 50%;transform:scaleX(1.062);">voltage</div>
<div class="lb" style="top:510px;font-size:11.20px;line-height:12px;height:12px;background:#000;left:459.0px;transform-origin:0 50%;transform:scaleX(1.062);padding-right:1px;">Total</div>
<div class="lb" style="top:490px;font-size:11.20px;line-height:12px;height:12px;left:575.6px;transform-origin:0 50%;transform:scaleX(1.062);">Low</div>
<div class="lb" style="top:503px;font-size:11.20px;line-height:12px;height:12px;left:575.6px;transform-origin:0 50%;transform:scaleX(1.062);">voltage</div>
<div class="lb" style="top:510px;font-size:11.20px;line-height:12px;height:12px;background:#000;left:576.2px;transform-origin:0 50%;transform:scaleX(1.062);padding-right:1px;">Total</div>
<div class="lb" style="top:490px;font-size:11.20px;line-height:12px;height:12px;left:795.4px;transform-origin:0 50%;transform:scaleX(1.062);">Low</div>
<div class="lb" style="top:503px;font-size:11.20px;line-height:12px;height:12px;left:795.4px;transform-origin:0 50%;transform:scaleX(1.062);">voltage</div>
<div class="lb" style="top:510px;font-size:11.20px;line-height:12px;height:12px;background:#000;left:796.0px;transform-origin:0 50%;transform:scaleX(1.062);padding-right:1px;">Total</div>
<div class="lb" style="top:490px;font-size:11.20px;line-height:12px;height:12px;left:966.6px;transform-origin:0 50%;transform:scaleX(1.062);">Low</div>
<div class="lb" style="top:503px;font-size:11.20px;line-height:12px;height:12px;left:966.6px;transform-origin:0 50%;transform:scaleX(1.062);">voltage</div>
<div class="lb" style="top:510px;font-size:11.20px;line-height:12px;height:12px;background:#000;left:967.2px;transform-origin:0 50%;transform:scaleX(1.062);padding-right:1px;">Total</div>
<div class="lb" style="top:505px;font-size:8.49px;line-height:10px;height:10px;left:341.0px;transform-origin:0 50%;transform:scaleX(1.062);">Contact</div>
<div class="lb" style="top:505px;font-size:8.49px;line-height:10px;height:10px;left:500.8px;transform-origin:0 50%;transform:scaleX(1.062);">Contact</div>
<div class="lb" style="top:504px;font-size:8.49px;line-height:10px;height:10px;left:840.2px;transform-origin:0 50%;transform:scaleX(1.062);">Contact</div>
<div class="lb" style="top:536px;font-size:7.84px;line-height:9px;height:9px;left:531.0px;transform-origin:0 50%;transform:scaleX(1.062);">Property</div>
<div class="lb" style="top:528px;font-size:11.20px;line-height:12px;height:12px;left:189.7px;transform:translateX(-50%) scaleX(1.062);">Injection</div>
<div class="lb" style="top:540px;font-size:11.20px;line-height:12px;height:12px;left:189.7px;transform:translateX(-50%) scaleX(1.062);">building</div>
<div class="lb" style="top:534px;font-size:11.20px;line-height:12px;height:12px;left:257.4px;transform-origin:0 50%;transform:scaleX(1.062);">Boiler</div>
<div class="lb" style="top:528px;font-size:11.20px;line-height:12px;height:12px;left:314.4px;transform:translateX(-50%) scaleX(1.062);">Office</div>
<div class="lb" style="top:540px;font-size:11.20px;line-height:12px;height:12px;left:314.4px;transform:translateX(-50%) scaleX(1.062);">building</div>
<div class="lb" style="top:528px;font-size:11.20px;line-height:12px;height:12px;left:391.9px;transform:translateX(-50%) scaleX(1.062);">Old dry</div>
<div class="lb" style="top:540px;font-size:11.20px;line-height:12px;height:12px;left:391.9px;transform:translateX(-50%) scaleX(1.062);">building</div>
<div class="lb" style="top:526px;font-size:11.20px;line-height:12px;height:12px;left:440.3px;transform:translateX(-50%) scaleX(1.062);">B4</div>
<div class="lb" style="top:539px;font-size:11.20px;line-height:12px;height:12px;left:440.3px;transform:translateX(-50%) scaleX(1.062);">Library</div>
<div class="lb" style="top:531px;font-size:11.20px;line-height:12px;height:12px;left:679.7px;transform-origin:0 50%;transform:scaleX(1.062);">Lost New empty</div>
<div class="lb" style="top:535px;font-size:7.84px;line-height:9px;height:9px;left:771.6px;transform-origin:0 50%;transform:scaleX(1.062);">andby</div>
<div class="lb" style="top:540px;font-size:11.20px;line-height:12px;height:12px;left:697.6px;transform-origin:0 50%;transform:scaleX(1.062);clip-path:inset(3.6px 0 0 0);">uid floor</div>
<div class="lb" style="top:546px;font-size:11.20px;line-height:10px;height:10px;background:#000;left:679.7px;transform-origin:0 50%;transform:scaleX(1.062);padding-right:2px;">B2</div>
<div class="lb" style="top:547px;font-size:5.60px;line-height:6px;height:6px;left:740.0px;transform-origin:0 50%;transform:scaleX(1.062);">_brary</div>
<div class="lb" style="top:553px;font-size:11.20px;line-height:12px;height:12px;left:680.8px;transform-origin:0 50%;transform:scaleX(1.062);">adjustment</div>
<div class="lb" style="top:527px;font-size:11.20px;line-height:12px;height:12px;left:918.0px;transform-origin:0 50%;transform:scaleX(1.062);">B3 New</div>
<div class="lb" style="top:540px;font-size:11.20px;line-height:12px;height:12px;left:905.4px;transform-origin:0 50%;transform:scaleX(1.062);">Libra</div>
<div class="lb" style="top:540px;font-size:11.20px;line-height:12px;height:12px;left:936.0px;transform-origin:0 50%;transform:scaleX(1.062);clip-path:inset(3.4px 0 0 0);">cold</div>
<div class="lb" style="top:550px;font-size:4.48px;line-height:5px;height:5px;left:938.0px;transform-origin:0 50%;transform:scaleX(1.062);">Station</div>
<div class="lb" style="top:530px;font-size:8.96px;line-height:10px;height:10px;left:986.0px;transform-origin:0 50%;transform:scaleX(1.065);">Office two-car traditional</div>
<div class="lb" style="top:540px;font-size:8.96px;line-height:10px;height:10px;left:986.0px;transform-origin:0 50%;transform:scaleX(1.015);">Chinese medicine animal carton</div>
<div class="lb" style="top:550px;font-size:4.67px;line-height:5px;height:5px;left:986.0px;transform-origin:0 50%;transform:scaleX(1.062);">Building</div>
<div class="lb" style="top:547px;font-size:7.46px;line-height:9px;height:9px;left:1011.6px;transform-origin:0 50%;transform:scaleX(1.062);">Room</div>
<div class="lb" style="top:548px;font-size:11.20px;line-height:10px;height:10px;background:#000;left:1033.0px;transform-origin:0 50%;transform:scaleX(1.062);">Garage room</div>
</div>
</body></html>
